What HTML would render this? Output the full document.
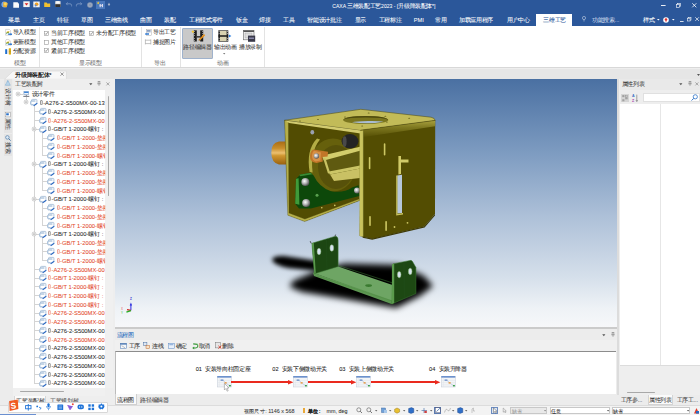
<!DOCTYPE html>
<html><head><meta charset="utf-8"><style>
*{box-sizing:border-box;margin:0;padding:0}
html,body{width:700px;height:415px;overflow:hidden;background:#eeeeee;font-family:"Liberation Sans",sans-serif;}
.a{position:absolute}
svg.a{overflow:visible}
.t{position:absolute;white-space:nowrap;line-height:1;font-weight:500;-webkit-text-stroke:0.06px currentColor}
.tofu{display:inline-block;vertical-align:-0.5px;margin-right:0.4px}
</style></head><body>
<div class="a" style="left:0px;top:0px;width:700px;height:25.6px;background:#2b579a"></div>
<div class="t" style="left:332.3px;top:3.77px;font-size:5.65px;color:#fff;-webkit-text-stroke:0.04px #fff"><span style="font-size:5.05px">CAXA </span><span style="letter-spacing:-0.35px">三维装配工艺</span><span style="font-size:5.05px">2023 - [</span><span style="letter-spacing:-0.35px">升级降装配体</span><span style="font-size:5.05px">*]</span></div>
<div class="t" style="left:8px;top:17.88px;font-size:5.65px;color:#fff;-webkit-text-stroke:0.04px #fff"><span style="letter-spacing:-0.35px">菜单</span></div>
<div class="t" style="left:33px;top:17.88px;font-size:5.65px;color:#fff;-webkit-text-stroke:0.04px #fff"><span style="letter-spacing:-0.35px">主页</span></div>
<div class="t" style="left:57px;top:17.88px;font-size:5.65px;color:#fff;-webkit-text-stroke:0.04px #fff"><span style="letter-spacing:-0.35px">特征</span></div>
<div class="t" style="left:81px;top:17.88px;font-size:5.65px;color:#fff;-webkit-text-stroke:0.04px #fff"><span style="letter-spacing:-0.35px">草图</span></div>
<div class="t" style="left:105px;top:17.88px;font-size:5.65px;color:#fff;-webkit-text-stroke:0.04px #fff"><span style="letter-spacing:-0.35px">三维曲线</span></div>
<div class="t" style="left:140px;top:17.88px;font-size:5.65px;color:#fff;-webkit-text-stroke:0.04px #fff"><span style="letter-spacing:-0.35px">曲面</span></div>
<div class="t" style="left:164.4px;top:17.88px;font-size:5.65px;color:#fff;-webkit-text-stroke:0.04px #fff"><span style="letter-spacing:-0.35px">装配</span></div>
<div class="t" style="left:189px;top:17.88px;font-size:5.65px;color:#fff;-webkit-text-stroke:0.04px #fff"><span style="letter-spacing:-0.35px">工程模式零件</span></div>
<div class="t" style="left:236px;top:17.88px;font-size:5.65px;color:#fff;-webkit-text-stroke:0.04px #fff"><span style="letter-spacing:-0.35px">钣金</span></div>
<div class="t" style="left:259px;top:17.88px;font-size:5.65px;color:#fff;-webkit-text-stroke:0.04px #fff"><span style="letter-spacing:-0.35px">焊接</span></div>
<div class="t" style="left:283.4px;top:17.88px;font-size:5.65px;color:#fff;-webkit-text-stroke:0.04px #fff"><span style="letter-spacing:-0.35px">工具</span></div>
<div class="t" style="left:307.4px;top:17.88px;font-size:5.65px;color:#fff;-webkit-text-stroke:0.04px #fff"><span style="letter-spacing:-0.35px">智能设计批注</span></div>
<div class="t" style="left:354.6px;top:17.88px;font-size:5.65px;color:#fff;-webkit-text-stroke:0.04px #fff"><span style="letter-spacing:-0.35px">显示</span></div>
<div class="t" style="left:378.7px;top:17.88px;font-size:5.65px;color:#fff;-webkit-text-stroke:0.04px #fff"><span style="letter-spacing:-0.35px">工程标注</span></div>
<div class="t" style="left:413.7px;top:17.88px;font-size:5.65px;color:#fff;-webkit-text-stroke:0.04px #fff">PMI</div>
<div class="t" style="left:435px;top:17.88px;font-size:5.65px;color:#fff;-webkit-text-stroke:0.04px #fff"><span style="letter-spacing:-0.35px">常用</span></div>
<div class="t" style="left:459px;top:17.88px;font-size:5.65px;color:#fff;-webkit-text-stroke:0.04px #fff"><span style="letter-spacing:-0.35px">加载应用程序</span></div>
<div class="t" style="left:507px;top:17.88px;font-size:5.65px;color:#fff;-webkit-text-stroke:0.04px #fff"><span style="letter-spacing:-0.35px">用户中心</span></div>
<div class="a" style="left:536px;top:14px;width:35.7px;height:11.5px;background:#fff"></div>
<div class="t" style="left:543.3px;top:18.07px;font-size:5.65px;color:#2b579a;"><span style="letter-spacing:-0.35px">三维工艺</span></div>
<div class="t" style="left:592px;top:17.88px;font-size:5.65px;color:#d0dbeb;"><span style="letter-spacing:-0.35px">功能搜索</span>...</div>
<div class="t" style="left:642.9px;top:17.88px;font-size:5.65px;color:#fff;-webkit-text-stroke:0.04px #fff"><span style="letter-spacing:-0.35px">样式</span></div>
<div class="a" style="left:0px;top:25.6px;width:700px;height:42.9px;background:#fff;border-bottom:0.7px solid #d8d8d8"></div>
<div class="t" style="left:12.7px;top:30.47px;font-size:5.65px;color:#3a3a3a;"><span style="letter-spacing:-0.35px">导入模型</span></div>
<div class="t" style="left:12.7px;top:39.88px;font-size:5.65px;color:#3a3a3a;"><span style="letter-spacing:-0.35px">更新模型</span></div>
<div class="t" style="left:12.7px;top:49.27px;font-size:5.65px;color:#3a3a3a;"><span style="letter-spacing:-0.35px">分配资源</span></div>
<div class="t" style="left:14.4px;top:60.88px;font-size:5.65px;color:#777;"><span style="letter-spacing:-0.35px">模型</span></div>
<div class="a" style="left:39.3px;top:27.3px;width:0.7px;height:39.3px;background:#e3e3e3"></div>
<svg class="a" style="left:44.3px;top:30.5px;" width="4.8" height="4.8" viewBox="0 0 4.8 4.8"><rect x="0.3" y="0.3" width="4.2" height="4.2" fill="#fff" stroke="#9a9a9a" stroke-width="0.6"/><path d="M1 2.5 L2 3.5 L3.8 1.2" fill="none" stroke="#555" stroke-width="0.6"/></svg>
<div class="t" style="left:51.1px;top:31.07px;font-size:5.65px;color:#3a3a3a;"><span style="letter-spacing:-0.35px">当前工序模型</span></div>
<svg class="a" style="left:89.3px;top:30.5px;" width="4.8" height="4.8" viewBox="0 0 4.8 4.8"><rect x="0.3" y="0.3" width="4.2" height="4.2" fill="#fff" stroke="#9a9a9a" stroke-width="0.6"/><path d="M1 2.5 L2 3.5 L3.8 1.2" fill="none" stroke="#555" stroke-width="0.6"/></svg>
<div class="t" style="left:96.4px;top:31.07px;font-size:5.65px;color:#3a3a3a;"><span style="letter-spacing:-0.35px">未分配工序模型</span></div>
<svg class="a" style="left:44.3px;top:39.5px;" width="4.8" height="4.8" viewBox="0 0 4.8 4.8"><rect x="0.3" y="0.3" width="4.2" height="4.2" fill="#fff" stroke="#9a9a9a" stroke-width="0.6"/></svg>
<div class="t" style="left:51.1px;top:40.07px;font-size:5.65px;color:#3a3a3a;"><span style="letter-spacing:-0.35px">其他工序模型</span></div>
<svg class="a" style="left:44.3px;top:48.0px;" width="4.8" height="4.8" viewBox="0 0 4.8 4.8"><rect x="0.3" y="0.3" width="4.2" height="4.2" fill="#fff" stroke="#9a9a9a" stroke-width="0.6"/><path d="M1 2.5 L2 3.5 L3.8 1.2" fill="none" stroke="#555" stroke-width="0.6"/></svg>
<div class="t" style="left:51.1px;top:48.57px;font-size:5.65px;color:#3a3a3a;"><span style="letter-spacing:-0.35px">紧前工序模型</span></div>
<div class="t" style="left:78.9px;top:60.88px;font-size:5.65px;color:#777;"><span style="letter-spacing:-0.35px">显示模型</span></div>
<div class="a" style="left:140.7px;top:27.3px;width:0.7px;height:39.3px;background:#e3e3e3"></div>
<div class="t" style="left:152.9px;top:30.47px;font-size:5.65px;color:#3a3a3a;"><span style="letter-spacing:-0.35px">导出工艺</span></div>
<div class="t" style="left:152.9px;top:40.47px;font-size:5.65px;color:#3a3a3a;"><span style="letter-spacing:-0.35px">捕捉图片</span></div>
<div class="t" style="left:154.3px;top:60.88px;font-size:5.65px;color:#777;"><span style="letter-spacing:-0.35px">导出</span></div>
<div class="a" style="left:179.6px;top:27.3px;width:0.7px;height:39.3px;background:#e3e3e3"></div>
<div class="a" style="left:182.4px;top:28px;width:30.5px;height:30.6px;background:#c9c9c9;border:0.7px solid #9fb2cc;border-radius:1px"></div>
<div class="t" style="left:183.3px;top:45.07px;font-size:5.65px;color:#3a3a3a;"><span style="letter-spacing:-0.35px">路径编辑器</span></div>
<div class="t" style="left:213.9px;top:45.07px;font-size:5.65px;color:#3a3a3a;"><span style="letter-spacing:-0.35px">输出动画</span></div>
<div class="t" style="left:239px;top:45.07px;font-size:5.65px;color:#3a3a3a;"><span style="letter-spacing:-0.35px">播放录制</span></div>
<div class="t" style="left:217.1px;top:60.88px;font-size:5.65px;color:#777;"><span style="letter-spacing:-0.35px">动画</span></div>
<div class="a" style="left:264.3px;top:27.3px;width:0.7px;height:39.3px;background:#e3e3e3"></div>
<svg class="a" style="left:4.6px;top:29.2px;" width="7.2" height="6.8" viewBox="0 0 7.2 6.8"><path d="M0.6 0.4 L4.4 0.4 L5.6 1.6 L5.6 6.2 L0.6 6.2 Z" fill="#fff" stroke="#9a9a9a" stroke-width="0.4"/><path d="M1 3.6 Q2.5 1.8 4.6 2.4 L3.4 4.6 Z" fill="#e0b020"/><path d="M1 4.8 Q2 3.4 3.8 3.6" fill="none" stroke="#3a9a5a" stroke-width="0.7"/><path d="M3.2 5.2 L6.4 5.2" stroke="#1f6fd0" stroke-width="1.3"/><path d="M5.8 3.9 L7.2 5.2 L5.8 6.5 Z" fill="#1f6fd0"/></svg>
<svg class="a" style="left:4.6px;top:38.6px;" width="7.2" height="6.8" viewBox="0 0 7.2 6.8"><path d="M2 0.3 Q5 0.3 5.6 2.6 L5.6 6.2 L0.6 6.2 L0.6 2 Q0.8 0.3 2 0.3 Z" fill="#fff" stroke="#9a9a9a" stroke-width="0.4"/><path d="M1 3.8 Q2.5 2 4.6 2.6 L3.4 4.8 Z" fill="#e0b020"/><path d="M1 5 Q2 3.6 3.8 3.8" fill="none" stroke="#3a9a5a" stroke-width="0.7"/><path d="M3.2 5.2 L6.4 5.2" stroke="#1f6fd0" stroke-width="1.3"/><path d="M5.8 3.9 L7.2 5.2 L5.8 6.5 Z" fill="#1f6fd0"/></svg>
<svg class="a" style="left:4.8px;top:48.4px;" width="7" height="7" viewBox="0 0 7 7"><rect x="0.2" y="1.2" width="1.9" height="4.8" fill="#1f6fd0"/><rect x="3.8" y="0.2" width="2.2" height="6.4" fill="#e8b820"/><path d="M3.8 2 L6 2 M3.8 3.5 L6 3.5 M3.8 5 L6 5" stroke="#9a7a10" stroke-width="0.4"/><path d="M2.8 1.6 L2.8 5.6" stroke="#aaa" stroke-width="0.4"/></svg>
<svg class="a" style="left:144.9px;top:29.1px;" width="6.6" height="6.8" viewBox="0 0 6.6 6.8"><rect x="1.2" y="0.3" width="5" height="6" fill="#fff" stroke="#999" stroke-width="0.4"/><path d="M1.8 1.6 L5.6 1.6 M1.8 2.8 L5.6 2.8" stroke="#2a4f8a" stroke-width="0.6"/><path d="M0.2 5 L4 5" stroke="#1f6fd0" stroke-width="1.4"/></svg>
<svg class="a" style="left:145px;top:38.8px;" width="6.2" height="5.8" viewBox="0 0 6.2 5.8"><path d="M0.4 0.4 L0.4 5.4 M5.8 0.4 L5.8 5.4 M0.4 1.2 L5.8 1.2 M0.4 4.6 L5.8 4.6" stroke="#9a9a9a" stroke-width="0.6" fill="none"/></svg>
<svg class="a" style="left:191.6px;top:30.4px;" width="13.6" height="11.8" viewBox="0 0 13.6 11.8"><rect x="1.8" y="0.3" width="3" height="11.2" fill="#1e1e1e"/><rect x="8.2" y="0.3" width="3" height="11.2" fill="#1e1e1e"/><g fill="#ddd"><rect x="2.3" y="1" width="0.7" height="0.8"/><rect x="2.3" y="3" width="0.7" height="0.8"/><rect x="2.3" y="5" width="0.7" height="0.8"/><rect x="2.3" y="8" width="0.7" height="0.8"/><rect x="2.3" y="10" width="0.7" height="0.8"/><rect x="10" y="1" width="0.7" height="0.8"/><rect x="10" y="3" width="0.7" height="0.8"/><rect x="10" y="5" width="0.7" height="0.8"/></g><rect x="4.8" y="6.2" width="3.4" height="1.3" fill="#1e1e1e"/><path d="M0.9 0 L1.3 1.1 L2.4 1.2 L1.5 1.9 L1.8 3 L0.9 2.4 L0 3 L0.3 1.9 L-0.6 1.2 L0.5 1.1 Z" fill="#f8c820"/><path d="M12.6 4.6 L7 10.2" stroke="#e8901a" stroke-width="1.6"/><path d="M6.4 10.8 L7.4 9.4 L8 10 Z" fill="#333"/></svg>
<svg class="a" style="left:218.2px;top:30.2px;" width="14" height="12" viewBox="0 0 14 12"><rect x="0.3" y="0.3" width="10" height="11.4" fill="#2a2a2a"/><rect x="2" y="0.9" width="6.6" height="4.6" fill="#d8d2b0"/><rect x="2" y="6.5" width="6.6" height="4.6" fill="#d8d2b0"/><rect x="0.3" y="5.5" width="10" height="1" fill="#111"/><g fill="#eee"><rect x="0.7" y="1" width="0.8" height="0.7"/><rect x="0.7" y="3" width="0.8" height="0.7"/><rect x="0.7" y="8" width="0.8" height="0.7"/><rect x="0.7" y="10" width="0.8" height="0.7"/><rect x="9.1" y="1" width="0.8" height="0.7"/><rect x="9.1" y="3" width="0.8" height="0.7"/><rect x="9.1" y="8" width="0.8" height="0.7"/><rect x="9.1" y="10" width="0.8" height="0.7"/></g><path d="M10.9 4.6 L13.4 6.1 L10.9 7.6 Z" fill="#2f80e0"/></svg>
<svg class="a" style="left:223.4px;top:52.6px;" width="2.4" height="1.6" viewBox="0 0 2.4 1.6"><path d="M0 0 L2.4 0 L1.2 1.4 Z" fill="#777"/></svg>
<svg class="a" style="left:243.4px;top:29.7px;" width="12.6" height="12.4" viewBox="0 0 12.6 12.4"><rect x="0.4" y="0.4" width="10.6" height="9.4" fill="#f4f4f4" stroke="#666" stroke-width="0.6"/><rect x="0.4" y="0.4" width="10.6" height="1.6" fill="#555"/><rect x="2" y="3" width="7" height="5" fill="#ddd" stroke="#999" stroke-width="0.4"/><rect x="5" y="5.6" width="7.2" height="6.2" fill="#3a3a4a"/><rect x="6" y="7.6" width="5" height="1.2" fill="#9a9ac0"/></svg>
<svg class="a" style="left:0.8px;top:1.3px;" width="7.2" height="6.8" viewBox="0 0 7.2 6.8"><circle cx="3.4" cy="3.6" r="3" fill="#7aa8e8"/><path d="M2.4 0.8 L6.8 2 L5.6 6.4 L2.2 5.8 Z" fill="#f0b030"/><circle cx="4.4" cy="3" r="1.4" fill="#f8d860"/></svg>
<svg class="a" style="left:12.9px;top:1.6px;" width="6.4" height="6" viewBox="0 0 6.4 6"><path d="M0.3 0.3 L4.6 0.3 L6 1.7 L6 5.7 L0.3 5.7 Z" fill="#fafafa"/></svg>
<svg class="a" style="left:23px;top:1.4px;" width="7" height="6.4" viewBox="0 0 7 6.4"><rect x="0.3" y="0.3" width="6.4" height="5.8" fill="#f2f2f2"/><path d="M1.6 2.2 L3.5 4.6 L5.4 2.2 Z" fill="#d82020"/></svg>
<svg class="a" style="left:33.4px;top:1.2px;" width="7" height="6.6" viewBox="0 0 7 6.6"><rect x="0.3" y="0.5" width="6.4" height="5.8" fill="#f2f2f2"/><circle cx="3.6" cy="3.2" r="1.8" fill="#f0a020"/><circle cx="2.6" cy="4.4" r="1" fill="#5a8ad8"/></svg>
<svg class="a" style="left:44.3px;top:1.8px;" width="6.4" height="5.2" viewBox="0 0 6.4 5.2"><path d="M0.2 0.6 L2.6 0.6 L3.2 1.4 L6.2 1.4 L6.2 5 L0.2 5 Z" fill="#f0c030"/></svg>
<svg class="a" style="left:55.2px;top:1.4px;" width="5.8" height="6.2" viewBox="0 0 5.8 6.2"><rect x="0.2" y="0.2" width="5.4" height="5.8" fill="#ddd"/><rect x="1.2" y="0.2" width="3.4" height="2.2" fill="#fafafa"/><rect x="0.2" y="3.2" width="5.4" height="2.8" fill="#333"/></svg>
<svg class="a" style="left:66px;top:2.2px;" width="6" height="4.6" viewBox="0 0 6 4.6"><path d="M1.6 0.4 L0.3 1.8 L1.6 3.2 M0.4 1.8 L4 1.8 Q5.6 1.8 5.6 3.4 L5.6 4.4" fill="none" stroke="#8aa4cc" stroke-width="0.7"/></svg>
<svg class="a" style="left:75.6px;top:2.2px;" width="6" height="4.6" viewBox="0 0 6 4.6"><path d="M4.4 0.4 L5.7 1.8 L4.4 3.2 M5.6 1.8 L2 1.8 Q0.4 1.8 0.4 3.4 L0.4 4.4" fill="none" stroke="#8aa4cc" stroke-width="0.7"/></svg>
<svg class="a" style="left:86.6px;top:1.6px;" width="6" height="6" viewBox="0 0 6 6"><circle cx="3" cy="3" r="2.8" fill="#8c9bb4"/><circle cx="3" cy="3" r="1.6" fill="none" stroke="#a8b4c8" stroke-width="0.5"/></svg>
<div class="a" style="left:96px;top:0.6px;width:8.6px;height:8.2px;background:#4a78bc"></div>
<svg class="a" style="left:97px;top:1.4px;" width="7" height="6.6" viewBox="0 0 7 6.6"><path d="M1.2 0.6 L1.6 1.6 L2.6 1.7 L1.8 2.3 L2.1 3.3 L1.2 2.7 L0.3 3.3 L0.6 2.3 L-0.2 1.7 L0.8 1.6 Z" fill="#f8d030"/><rect x="2.6" y="3" width="1.2" height="3.2" fill="#dde"/><rect x="4.8" y="3" width="1.2" height="3.2" fill="#dde"/><rect x="2.6" y="4.2" width="3.4" height="0.7" fill="#dde"/></svg>
<svg class="a" style="left:107.6px;top:3.2px;" width="2" height="3" viewBox="0 0 2 3"><path d="M0.2 0.4 L1.8 0.4 M0.2 1.2 L1.8 1.2 L1 2.6 Z" fill="#ddd" stroke="#ddd" stroke-width="0.4"/></svg>
<svg class="a" style="left:660.6px;top:5px;" width="4.6" height="1" viewBox="0 0 4.6 1"><rect width="4.6" height="0.9" fill="#fff"/></svg>
<svg class="a" style="left:676.2px;top:2.8px;" width="5" height="5" viewBox="0 0 5 5"><rect x="1.4" y="0.4" width="3.2" height="3.2" fill="none" stroke="#fff" stroke-width="0.6"/><rect x="0.4" y="1.4" width="3.2" height="3.2" fill="#2b579a" stroke="#fff" stroke-width="0.6"/></svg>
<svg class="a" style="left:692px;top:3px;" width="4.6" height="4.6" viewBox="0 0 4.6 4.6"><path d="M0.3 0.3 L4.3 4.3 M4.3 0.3 L0.3 4.3" stroke="#fff" stroke-width="0.8"/></svg>
<svg class="a" style="left:582.4px;top:16.4px;" width="4" height="6" viewBox="0 0 4 6"><circle cx="2" cy="2" r="1.6" fill="none" stroke="#dfe6f0" stroke-width="0.5"/><path d="M1.4 4 L2.6 4 M1.5 5 L2.5 5" stroke="#dfe6f0" stroke-width="0.5"/></svg>
<svg class="a" style="left:657.4px;top:18.8px;" width="2.6" height="1.8" viewBox="0 0 2.6 1.8"><path d="M0 0 L2.6 0 L1.3 1.6 Z" fill="#fff"/></svg>
<svg class="a" style="left:663.2px;top:16.6px;" width="6" height="6" viewBox="0 0 6 6"><circle cx="3" cy="3" r="2.8" fill="#fff"/><circle cx="3" cy="2.5" r="1.3" fill="#e03030"/><rect x="2.6" y="3" width="0.8" height="1.8" fill="#e03030"/></svg>
<svg class="a" style="left:671.6px;top:18.8px;" width="2.6" height="1.8" viewBox="0 0 2.6 1.8"><path d="M0 0 L2.6 0 L1.3 1.6 Z" fill="#fff"/></svg>
<svg class="a" style="left:679.6px;top:20.6px;" width="3.6" height="0.8" viewBox="0 0 3.6 0.8"><rect width="3.6" height="0.8" fill="#fff"/></svg>
<svg class="a" style="left:687px;top:17.4px;" width="4.4" height="4.4" viewBox="0 0 4.4 4.4"><rect x="1.2" y="0.3" width="2.8" height="2.8" fill="none" stroke="#fff" stroke-width="0.55"/><rect x="0.3" y="1.2" width="2.8" height="2.8" fill="#2b579a" stroke="#fff" stroke-width="0.55"/></svg>
<svg class="a" style="left:695px;top:17.4px;" width="4.2" height="4.2" viewBox="0 0 4.2 4.2"><path d="M0.3 0.3 L3.9 3.9 M3.9 0.3 L0.3 3.9" stroke="#fff" stroke-width="0.7"/></svg>
<div class="a" style="left:0px;top:68.5px;width:700px;height:10px;background:#e6e6e6"></div>
<svg class="a" style="left:0px;top:68.5px;" width="70" height="10.5" viewBox="0 0 70 10.5"><path d="M4.5 10.3 L13 2.1 L66.4 2.1 L66.4 10.3 Z" fill="#f7f7f7" stroke="#d0d0d0" stroke-width="0.5"/></svg>
<div class="t" style="left:15.4px;top:72.67px;font-size:5.65px;color:#1a1a1a;font-weight:700;-webkit-text-stroke:0"><span style="letter-spacing:-0.35px">升级降装配体</span>*</div>
<svg class="a" style="left:59.6px;top:72.4px;" width="4.2" height="4.2" viewBox="0 0 4.2 4.2"><path d="M0.5 0.5 L3.7 3.7 M3.7 0.5 L0.5 3.7" stroke="#555" stroke-width="0.6"/></svg>
<div class="a" style="left:0px;top:78.5px;width:114.5px;height:327px;background:#eeeeee"></div>
<div class="a" style="left:0px;top:78.5px;width:12.6px;height:327px;background:#ececec"></div>
<div class="a" style="left:3.6px;top:79.2px;width:8.6px;height:31px;background:#e4e4e4"></div>
<div class="a" style="left:3.6px;top:111px;width:8.6px;height:22px;background:#e4e4e4"></div>
<div class="a" style="left:3.6px;top:134px;width:8.6px;height:22px;background:#e4e4e4"></div>
<svg class="a" style="left:4.8px;top:80.2px;" width="5.6" height="5.6" viewBox="0 0 5.6 5.6"><path d="M2.8 0.3 L5.3 5.3 L0.3 5.3 Z" fill="#9cc3e0" stroke="#6aa0cc" stroke-width="0.4"/><path d="M1.5 3 L4.1 3 M1 4.2 L4.6 4.2" stroke="#fff" stroke-width="0.4"/></svg>
<div class="t" style="left:4.6px;top:87.8px;font-size:5.65px;color:#444;font-weight:500;writing-mode:vertical-rl;text-orientation:sideways">设计树</div>
<svg class="a" style="left:4.8px;top:111.6px;" width="5.6" height="5.2" viewBox="0 0 5.6 5.2"><rect x="0.3" y="0.3" width="5" height="4.6" fill="#fff" stroke="#888" stroke-width="0.4"/><rect x="1.2" y="1.3" width="2.6" height="2" fill="#2a70c8"/></svg>
<div class="t" style="left:4.6px;top:118.3px;font-size:5.65px;color:#444;font-weight:500;writing-mode:vertical-rl;text-orientation:sideways">属性</div>
<svg class="a" style="left:4.6px;top:135px;" width="6" height="6" viewBox="0 0 6 6"><circle cx="2.4" cy="2.4" r="1.8" fill="#dbe9f5" stroke="#3f6f9f" stroke-width="0.6"/><path d="M3.7 3.7 L5.6 5.6" stroke="#3f6f9f" stroke-width="0.9"/></svg>
<div class="t" style="left:4.6px;top:141.5px;font-size:5.65px;color:#444;font-weight:500;writing-mode:vertical-rl;text-orientation:sideways">搜索</div>
<div class="t" style="left:14.9px;top:81.88px;font-size:5.65px;color:#4a4a4a;"><span style="letter-spacing:-0.35px">工艺装配树</span></div>
<svg class="a" style="left:88.8px;top:82.6px;" width="3.6" height="2.4" viewBox="0 0 3.6 2.4"><path d="M0.2 0.2 L3.4 0.2 L1.8 2.2 Z" fill="#555"/></svg>
<svg class="a" style="left:96.8px;top:81.2px;" width="4" height="5" viewBox="0 0 4 5"><path d="M0.8 0.5 L3.2 0.5 M1.2 0.5 L1.2 2.8 M2.8 0.5 L2.8 2.8 M0.3 2.8 L3.7 2.8 M2 2.8 L2 4.8" fill="none" stroke="#666" stroke-width="0.5"/></svg>
<svg class="a" style="left:105.6px;top:82.1px;" width="3.8" height="3.8" viewBox="0 0 3.8 3.8"><path d="M0.4 0.4 L3.4 3.4 M3.4 0.4 L0.4 3.4" stroke="#666" stroke-width="0.5"/></svg>
<div class="a" style="left:12.9px;top:89.8px;width:92.3px;height:298.3px;background:#fff"></div>
<div class="a" style="left:105.2px;top:89.8px;width:7.6px;height:298.3px;background:#f0f0f0"></div>
<div class="a" style="left:107.7px;top:96px;width:1.6px;height:100px;background:#a8a8a8;border-radius:1px"></div>
<div class="a" style="left:12.9px;top:388.1px;width:92.3px;height:7.6px;background:#f0f0f0"></div>
<div class="a" style="left:20.4px;top:391px;width:43.3px;height:1.4px;background:#a8a8a8;border-radius:1px"></div>
<div class="a" style="left:14.2px;top:396px;width:32.2px;height:10px;background:#fafafa;border:0.5px solid #d7d7d7;border-top:none"></div>
<div class="t" style="left:16.3px;top:399.18px;font-size:5.65px;color:#444;"><span style="letter-spacing:-0.35px">工艺装配树</span></div>
<div class="t" style="left:50.2px;top:399.18px;font-size:5.65px;color:#555;"><span style="letter-spacing:-0.35px">工艺规划树</span></div>
<div class="a" style="left:0;top:0;width:700px;height:415px;clip-path:inset(89.8px 594.8px 26.9px 12.9px)">
<div class="a" style="left:34.3px;top:104.96000000000001px;width:0.55px;height:278.02px;background:#d4d4d4"></div>
<div class="a" style="left:26.2px;top:96.7px;width:0.55px;height:3.760000000000005px;background:#d4d4d4"></div>
<div class="a" style="left:19.8px;top:93.7px;width:3.099999999999998px;height:0.55px;background:#d4d4d4"></div>
<div class="a" style="left:34.3px;top:111.22px;width:4.5px;height:0.55px;background:#d4d4d4"></div>
<div class="a" style="left:34.3px;top:119.98px;width:4.5px;height:0.55px;background:#d4d4d4"></div>
<div class="a" style="left:34.3px;top:128.74px;width:4.5px;height:0.55px;background:#d4d4d4"></div>
<div class="a" style="left:42.4px;top:137.5px;width:4.399999999999999px;height:0.55px;background:#d4d4d4"></div>
<div class="a" style="left:42.4px;top:146.26px;width:4.399999999999999px;height:0.55px;background:#d4d4d4"></div>
<div class="a" style="left:42.4px;top:155.02px;width:4.399999999999999px;height:0.55px;background:#d4d4d4"></div>
<div class="a" style="left:34.3px;top:163.78px;width:4.5px;height:0.55px;background:#d4d4d4"></div>
<div class="a" style="left:42.4px;top:172.54000000000002px;width:4.399999999999999px;height:0.55px;background:#d4d4d4"></div>
<div class="a" style="left:42.4px;top:181.3px;width:4.399999999999999px;height:0.55px;background:#d4d4d4"></div>
<div class="a" style="left:42.4px;top:190.06px;width:4.399999999999999px;height:0.55px;background:#d4d4d4"></div>
<div class="a" style="left:34.3px;top:198.82px;width:4.5px;height:0.55px;background:#d4d4d4"></div>
<div class="a" style="left:42.4px;top:207.57999999999998px;width:4.399999999999999px;height:0.55px;background:#d4d4d4"></div>
<div class="a" style="left:42.4px;top:216.34px;width:4.399999999999999px;height:0.55px;background:#d4d4d4"></div>
<div class="a" style="left:42.4px;top:225.10000000000002px;width:4.399999999999999px;height:0.55px;background:#d4d4d4"></div>
<div class="a" style="left:34.3px;top:233.86px;width:4.5px;height:0.55px;background:#d4d4d4"></div>
<div class="a" style="left:42.4px;top:242.62px;width:4.399999999999999px;height:0.55px;background:#d4d4d4"></div>
<div class="a" style="left:42.4px;top:251.38px;width:4.399999999999999px;height:0.55px;background:#d4d4d4"></div>
<div class="a" style="left:42.4px;top:260.14px;width:4.399999999999999px;height:0.55px;background:#d4d4d4"></div>
<div class="a" style="left:34.3px;top:268.9px;width:4.5px;height:0.55px;background:#d4d4d4"></div>
<div class="a" style="left:34.3px;top:277.66px;width:4.5px;height:0.55px;background:#d4d4d4"></div>
<div class="a" style="left:34.3px;top:286.42px;width:4.5px;height:0.55px;background:#d4d4d4"></div>
<div class="a" style="left:34.3px;top:295.18px;width:4.5px;height:0.55px;background:#d4d4d4"></div>
<div class="a" style="left:34.3px;top:303.94px;width:4.5px;height:0.55px;background:#d4d4d4"></div>
<div class="a" style="left:34.3px;top:312.7px;width:4.5px;height:0.55px;background:#d4d4d4"></div>
<div class="a" style="left:34.3px;top:321.46px;width:4.5px;height:0.55px;background:#d4d4d4"></div>
<div class="a" style="left:34.3px;top:330.21999999999997px;width:4.5px;height:0.55px;background:#d4d4d4"></div>
<div class="a" style="left:34.3px;top:338.98px;width:4.5px;height:0.55px;background:#d4d4d4"></div>
<div class="a" style="left:34.3px;top:347.74px;width:4.5px;height:0.55px;background:#d4d4d4"></div>
<div class="a" style="left:34.3px;top:356.5px;width:4.5px;height:0.55px;background:#d4d4d4"></div>
<div class="a" style="left:34.3px;top:365.26px;width:4.5px;height:0.55px;background:#d4d4d4"></div>
<div class="a" style="left:34.3px;top:374.02px;width:4.5px;height:0.55px;background:#d4d4d4"></div>
<div class="a" style="left:34.3px;top:382.78px;width:4.5px;height:0.55px;background:#d4d4d4"></div>
<div class="a" style="left:42.4px;top:131.74px;width:0.55px;height:23.47999999999999px;background:#d4d4d4"></div>
<div class="a" style="left:42.4px;top:166.78px;width:0.55px;height:23.47999999999999px;background:#d4d4d4"></div>
<div class="a" style="left:42.4px;top:201.82px;width:0.55px;height:23.480000000000018px;background:#d4d4d4"></div>
<div class="a" style="left:42.4px;top:236.86px;width:0.55px;height:23.47999999999996px;background:#d4d4d4"></div>
<svg class="a" style="left:15.75px;top:91.65px;" width="4.1" height="4.1" viewBox="0 0 4.1 4.1"><rect x="0.25" y="0.25" width="3.6" height="3.6" rx="1.1" fill="#f8f8f8" stroke="#a8a8a8" stroke-width="0.5"/><path d="M1 2.05 L3.1 2.05" stroke="#666" stroke-width="0.55"/></svg>
<svg class="a" style="left:22.9px;top:90.7px;" width="6.6" height="6" viewBox="0 0 6.6 6"><rect x="0.9" y="0.4" width="4.8" height="3.4" fill="#eef4fb" stroke="#6b8db8" stroke-width="0.5"/><rect x="1.1" y="0.6" width="4.4" height="1.4" fill="#3f86d8"/><rect x="2.8" y="3.9" width="1" height="1" fill="#778"/><rect x="0.3" y="4.9" width="6" height="0.8" fill="#4a4f5a"/></svg>
<div class="t" style="left:31.8px;top:91.58px;font-size:5.65px;color:#3a3a3a;"><span style="letter-spacing:-0.35px">设计零件</span></div>
<svg class="a" style="left:24.15px;top:100.41000000000001px;" width="4.1" height="4.1" viewBox="0 0 4.1 4.1"><rect x="0.25" y="0.25" width="3.6" height="3.6" rx="1.1" fill="#f8f8f8" stroke="#a8a8a8" stroke-width="0.5"/><path d="M1 2.05 L3.1 2.05" stroke="#666" stroke-width="0.55"/></svg>
<svg class="a" style="left:30.4px;top:99.26px;" width="7.6" height="7" viewBox="0 0 7.6 7"><path d="M1.6 1.8 L1.6 1.1 Q1.6 0.4 2.3 0.4 L6.3 0.4 Q6.9 0.4 6.9 1 L6.9 3.8" fill="none" stroke="#a9c0d8" stroke-width="0.9"/><path d="M5.4 2 L1.4 2 Q0.8 2 0.8 2.6 L0.8 5.2 Q0.8 5.8 1.4 5.8 L3.7 5.8" fill="none" stroke="#7ea2c8" stroke-width="0.9"/><path d="M4 6.5 L6.9 4.4" stroke="#2c68c0" stroke-width="1.2" stroke-linecap="round"/></svg>
<div class="t" style="left:40.0px;top:100.06px;font-size:5.8px;color:#2a2a2a;"><svg class="tofu" width="2.8" height="5" viewBox="0 0 2.8 5"><rect x="0.55" y="0.4" width="1.7" height="4.3" rx="0.6" fill="none" stroke="currentColor" stroke-width="0.7" opacity="0.7"/></svg>-A276-2-S500MX-00-13</div>
<svg class="a" style="left:38.8px;top:108.02px;" width="7.6" height="7" viewBox="0 0 7.6 7"><path d="M1.6 1.8 L1.6 1.1 Q1.6 0.4 2.3 0.4 L6.3 0.4 Q6.9 0.4 6.9 1 L6.9 3.8" fill="none" stroke="#a9c0d8" stroke-width="0.9"/><path d="M5.4 2 L1.4 2 Q0.8 2 0.8 2.6 L0.8 5.2 Q0.8 5.8 1.4 5.8 L3.7 5.8" fill="none" stroke="#7ea2c8" stroke-width="0.9"/><path d="M4 6.5 L6.9 4.4" stroke="#2c68c0" stroke-width="1.2" stroke-linecap="round"/></svg>
<div class="t" style="left:48.3px;top:108.82px;font-size:5.8px;color:#2a2a2a;"><svg class="tofu" width="2.8" height="5" viewBox="0 0 2.8 5"><rect x="0.55" y="0.4" width="1.7" height="4.3" rx="0.6" fill="none" stroke="currentColor" stroke-width="0.7" opacity="0.7"/></svg>-A276-2-S500MX-00</div>
<svg class="a" style="left:38.8px;top:116.78px;" width="7.6" height="7" viewBox="0 0 7.6 7"><path d="M1.6 1.8 L1.6 1.1 Q1.6 0.4 2.3 0.4 L6.3 0.4 Q6.9 0.4 6.9 1 L6.9 3.8" fill="none" stroke="#a9c0d8" stroke-width="0.9"/><path d="M5.4 2 L1.4 2 Q0.8 2 0.8 2.6 L0.8 5.2 Q0.8 5.8 1.4 5.8 L3.7 5.8" fill="none" stroke="#7ea2c8" stroke-width="0.9"/><path d="M4 6.5 L6.9 4.4" stroke="#2c68c0" stroke-width="1.2" stroke-linecap="round"/></svg>
<div class="t" style="left:48.3px;top:117.58px;font-size:5.8px;color:#e4492c;"><svg class="tofu" width="2.8" height="5" viewBox="0 0 2.8 5"><rect x="0.55" y="0.4" width="1.7" height="4.3" rx="0.6" fill="none" stroke="currentColor" stroke-width="0.7" opacity="0.7"/></svg>-A276-2-S500MX-00</div>
<svg class="a" style="left:32.45px;top:126.69000000000001px;" width="4.1" height="4.1" viewBox="0 0 4.1 4.1"><rect x="0.25" y="0.25" width="3.6" height="3.6" rx="1.1" fill="#f8f8f8" stroke="#a8a8a8" stroke-width="0.5"/><path d="M1 2.05 L3.1 2.05" stroke="#666" stroke-width="0.55"/></svg>
<svg class="a" style="left:38.8px;top:125.54px;" width="7.6" height="7" viewBox="0 0 7.6 7"><path d="M1.6 1.8 L1.6 1.1 Q1.6 0.4 2.3 0.4 L6.3 0.4 Q6.9 0.4 6.9 1 L6.9 3.8" fill="none" stroke="#a9c0d8" stroke-width="0.9"/><path d="M5.4 2 L1.4 2 Q0.8 2 0.8 2.6 L0.8 5.2 Q0.8 5.8 1.4 5.8 L3.7 5.8" fill="none" stroke="#7ea2c8" stroke-width="0.9"/><path d="M4 6.5 L6.9 4.4" stroke="#2c68c0" stroke-width="1.2" stroke-linecap="round"/></svg>
<div class="t" style="left:48.3px;top:126.34px;font-size:5.8px;color:#2a2a2a;"><svg class="tofu" width="2.8" height="5" viewBox="0 0 2.8 5"><rect x="0.55" y="0.4" width="1.7" height="4.3" rx="0.6" fill="none" stroke="currentColor" stroke-width="0.7" opacity="0.7"/></svg>-GB/T 1-2000-<span style="letter-spacing:-0.20px">螺钉</span> :</div>
<svg class="a" style="left:46.8px;top:134.3px;" width="7.6" height="7" viewBox="0 0 7.6 7"><path d="M1.6 1.8 L1.6 1.1 Q1.6 0.4 2.3 0.4 L6.3 0.4 Q6.9 0.4 6.9 1 L6.9 3.8" fill="none" stroke="#a9c0d8" stroke-width="0.9"/><path d="M5.4 2 L1.4 2 Q0.8 2 0.8 2.6 L0.8 5.2 Q0.8 5.8 1.4 5.8 L3.7 5.8" fill="none" stroke="#7ea2c8" stroke-width="0.9"/><path d="M4 6.5 L6.9 4.4" stroke="#2c68c0" stroke-width="1.2" stroke-linecap="round"/></svg>
<div class="t" style="left:56.9px;top:135.10px;font-size:5.8px;color:#e4492c;"><svg class="tofu" width="2.8" height="5" viewBox="0 0 2.8 5"><rect x="0.55" y="0.4" width="1.7" height="4.3" rx="0.6" fill="none" stroke="currentColor" stroke-width="0.7" opacity="0.7"/></svg>-GB/T 1-2000-<span style="letter-spacing:-0.20px">垫圈</span></div>
<svg class="a" style="left:46.8px;top:143.06px;" width="7.6" height="7" viewBox="0 0 7.6 7"><path d="M1.6 1.8 L1.6 1.1 Q1.6 0.4 2.3 0.4 L6.3 0.4 Q6.9 0.4 6.9 1 L6.9 3.8" fill="none" stroke="#a9c0d8" stroke-width="0.9"/><path d="M5.4 2 L1.4 2 Q0.8 2 0.8 2.6 L0.8 5.2 Q0.8 5.8 1.4 5.8 L3.7 5.8" fill="none" stroke="#7ea2c8" stroke-width="0.9"/><path d="M4 6.5 L6.9 4.4" stroke="#2c68c0" stroke-width="1.2" stroke-linecap="round"/></svg>
<div class="t" style="left:56.9px;top:143.86px;font-size:5.8px;color:#e4492c;"><svg class="tofu" width="2.8" height="5" viewBox="0 0 2.8 5"><rect x="0.55" y="0.4" width="1.7" height="4.3" rx="0.6" fill="none" stroke="currentColor" stroke-width="0.7" opacity="0.7"/></svg>-GB/T 1-2000-<span style="letter-spacing:-0.20px">垫圈</span></div>
<svg class="a" style="left:46.8px;top:151.82000000000002px;" width="7.6" height="7" viewBox="0 0 7.6 7"><path d="M1.6 1.8 L1.6 1.1 Q1.6 0.4 2.3 0.4 L6.3 0.4 Q6.9 0.4 6.9 1 L6.9 3.8" fill="none" stroke="#a9c0d8" stroke-width="0.9"/><path d="M5.4 2 L1.4 2 Q0.8 2 0.8 2.6 L0.8 5.2 Q0.8 5.8 1.4 5.8 L3.7 5.8" fill="none" stroke="#7ea2c8" stroke-width="0.9"/><path d="M4 6.5 L6.9 4.4" stroke="#2c68c0" stroke-width="1.2" stroke-linecap="round"/></svg>
<div class="t" style="left:56.9px;top:152.62px;font-size:5.8px;color:#e4492c;"><svg class="tofu" width="2.8" height="5" viewBox="0 0 2.8 5"><rect x="0.55" y="0.4" width="1.7" height="4.3" rx="0.6" fill="none" stroke="currentColor" stroke-width="0.7" opacity="0.7"/></svg>-GB/T 1-2000-<span style="letter-spacing:-0.20px">螺钉</span></div>
<svg class="a" style="left:32.45px;top:161.73px;" width="4.1" height="4.1" viewBox="0 0 4.1 4.1"><rect x="0.25" y="0.25" width="3.6" height="3.6" rx="1.1" fill="#f8f8f8" stroke="#a8a8a8" stroke-width="0.5"/><path d="M1 2.05 L3.1 2.05" stroke="#666" stroke-width="0.55"/></svg>
<svg class="a" style="left:38.8px;top:160.58px;" width="7.6" height="7" viewBox="0 0 7.6 7"><path d="M1.6 1.8 L1.6 1.1 Q1.6 0.4 2.3 0.4 L6.3 0.4 Q6.9 0.4 6.9 1 L6.9 3.8" fill="none" stroke="#a9c0d8" stroke-width="0.9"/><path d="M5.4 2 L1.4 2 Q0.8 2 0.8 2.6 L0.8 5.2 Q0.8 5.8 1.4 5.8 L3.7 5.8" fill="none" stroke="#7ea2c8" stroke-width="0.9"/><path d="M4 6.5 L6.9 4.4" stroke="#2c68c0" stroke-width="1.2" stroke-linecap="round"/></svg>
<div class="t" style="left:48.3px;top:161.38px;font-size:5.8px;color:#2a2a2a;"><svg class="tofu" width="2.8" height="5" viewBox="0 0 2.8 5"><rect x="0.55" y="0.4" width="1.7" height="4.3" rx="0.6" fill="none" stroke="currentColor" stroke-width="0.7" opacity="0.7"/></svg>-GB/T 1-2000-<span style="letter-spacing:-0.20px">螺钉</span> :</div>
<svg class="a" style="left:46.8px;top:169.34000000000003px;" width="7.6" height="7" viewBox="0 0 7.6 7"><path d="M1.6 1.8 L1.6 1.1 Q1.6 0.4 2.3 0.4 L6.3 0.4 Q6.9 0.4 6.9 1 L6.9 3.8" fill="none" stroke="#a9c0d8" stroke-width="0.9"/><path d="M5.4 2 L1.4 2 Q0.8 2 0.8 2.6 L0.8 5.2 Q0.8 5.8 1.4 5.8 L3.7 5.8" fill="none" stroke="#7ea2c8" stroke-width="0.9"/><path d="M4 6.5 L6.9 4.4" stroke="#2c68c0" stroke-width="1.2" stroke-linecap="round"/></svg>
<div class="t" style="left:56.9px;top:170.14px;font-size:5.8px;color:#e4492c;"><svg class="tofu" width="2.8" height="5" viewBox="0 0 2.8 5"><rect x="0.55" y="0.4" width="1.7" height="4.3" rx="0.6" fill="none" stroke="currentColor" stroke-width="0.7" opacity="0.7"/></svg>-GB/T 1-2000-<span style="letter-spacing:-0.20px">垫圈</span></div>
<svg class="a" style="left:46.8px;top:178.10000000000002px;" width="7.6" height="7" viewBox="0 0 7.6 7"><path d="M1.6 1.8 L1.6 1.1 Q1.6 0.4 2.3 0.4 L6.3 0.4 Q6.9 0.4 6.9 1 L6.9 3.8" fill="none" stroke="#a9c0d8" stroke-width="0.9"/><path d="M5.4 2 L1.4 2 Q0.8 2 0.8 2.6 L0.8 5.2 Q0.8 5.8 1.4 5.8 L3.7 5.8" fill="none" stroke="#7ea2c8" stroke-width="0.9"/><path d="M4 6.5 L6.9 4.4" stroke="#2c68c0" stroke-width="1.2" stroke-linecap="round"/></svg>
<div class="t" style="left:56.9px;top:178.90px;font-size:5.8px;color:#e4492c;"><svg class="tofu" width="2.8" height="5" viewBox="0 0 2.8 5"><rect x="0.55" y="0.4" width="1.7" height="4.3" rx="0.6" fill="none" stroke="currentColor" stroke-width="0.7" opacity="0.7"/></svg>-GB/T 1-2000-<span style="letter-spacing:-0.20px">垫圈</span></div>
<svg class="a" style="left:46.8px;top:186.86px;" width="7.6" height="7" viewBox="0 0 7.6 7"><path d="M1.6 1.8 L1.6 1.1 Q1.6 0.4 2.3 0.4 L6.3 0.4 Q6.9 0.4 6.9 1 L6.9 3.8" fill="none" stroke="#a9c0d8" stroke-width="0.9"/><path d="M5.4 2 L1.4 2 Q0.8 2 0.8 2.6 L0.8 5.2 Q0.8 5.8 1.4 5.8 L3.7 5.8" fill="none" stroke="#7ea2c8" stroke-width="0.9"/><path d="M4 6.5 L6.9 4.4" stroke="#2c68c0" stroke-width="1.2" stroke-linecap="round"/></svg>
<div class="t" style="left:56.9px;top:187.66px;font-size:5.8px;color:#e4492c;"><svg class="tofu" width="2.8" height="5" viewBox="0 0 2.8 5"><rect x="0.55" y="0.4" width="1.7" height="4.3" rx="0.6" fill="none" stroke="currentColor" stroke-width="0.7" opacity="0.7"/></svg>-GB/T 1-2000-<span style="letter-spacing:-0.20px">螺钉</span></div>
<svg class="a" style="left:32.45px;top:196.76999999999998px;" width="4.1" height="4.1" viewBox="0 0 4.1 4.1"><rect x="0.25" y="0.25" width="3.6" height="3.6" rx="1.1" fill="#f8f8f8" stroke="#a8a8a8" stroke-width="0.5"/><path d="M1 2.05 L3.1 2.05" stroke="#666" stroke-width="0.55"/></svg>
<svg class="a" style="left:38.8px;top:195.62px;" width="7.6" height="7" viewBox="0 0 7.6 7"><path d="M1.6 1.8 L1.6 1.1 Q1.6 0.4 2.3 0.4 L6.3 0.4 Q6.9 0.4 6.9 1 L6.9 3.8" fill="none" stroke="#a9c0d8" stroke-width="0.9"/><path d="M5.4 2 L1.4 2 Q0.8 2 0.8 2.6 L0.8 5.2 Q0.8 5.8 1.4 5.8 L3.7 5.8" fill="none" stroke="#7ea2c8" stroke-width="0.9"/><path d="M4 6.5 L6.9 4.4" stroke="#2c68c0" stroke-width="1.2" stroke-linecap="round"/></svg>
<div class="t" style="left:48.3px;top:196.42px;font-size:5.8px;color:#2a2a2a;"><svg class="tofu" width="2.8" height="5" viewBox="0 0 2.8 5"><rect x="0.55" y="0.4" width="1.7" height="4.3" rx="0.6" fill="none" stroke="currentColor" stroke-width="0.7" opacity="0.7"/></svg>-GB/T 1-2000-<span style="letter-spacing:-0.20px">螺钉</span> :</div>
<svg class="a" style="left:46.8px;top:204.38px;" width="7.6" height="7" viewBox="0 0 7.6 7"><path d="M1.6 1.8 L1.6 1.1 Q1.6 0.4 2.3 0.4 L6.3 0.4 Q6.9 0.4 6.9 1 L6.9 3.8" fill="none" stroke="#a9c0d8" stroke-width="0.9"/><path d="M5.4 2 L1.4 2 Q0.8 2 0.8 2.6 L0.8 5.2 Q0.8 5.8 1.4 5.8 L3.7 5.8" fill="none" stroke="#7ea2c8" stroke-width="0.9"/><path d="M4 6.5 L6.9 4.4" stroke="#2c68c0" stroke-width="1.2" stroke-linecap="round"/></svg>
<div class="t" style="left:56.9px;top:205.18px;font-size:5.8px;color:#e4492c;"><svg class="tofu" width="2.8" height="5" viewBox="0 0 2.8 5"><rect x="0.55" y="0.4" width="1.7" height="4.3" rx="0.6" fill="none" stroke="currentColor" stroke-width="0.7" opacity="0.7"/></svg>-GB/T 1-2000-<span style="letter-spacing:-0.20px">垫圈</span></div>
<svg class="a" style="left:46.8px;top:213.14000000000001px;" width="7.6" height="7" viewBox="0 0 7.6 7"><path d="M1.6 1.8 L1.6 1.1 Q1.6 0.4 2.3 0.4 L6.3 0.4 Q6.9 0.4 6.9 1 L6.9 3.8" fill="none" stroke="#a9c0d8" stroke-width="0.9"/><path d="M5.4 2 L1.4 2 Q0.8 2 0.8 2.6 L0.8 5.2 Q0.8 5.8 1.4 5.8 L3.7 5.8" fill="none" stroke="#7ea2c8" stroke-width="0.9"/><path d="M4 6.5 L6.9 4.4" stroke="#2c68c0" stroke-width="1.2" stroke-linecap="round"/></svg>
<div class="t" style="left:56.9px;top:213.94px;font-size:5.8px;color:#e4492c;"><svg class="tofu" width="2.8" height="5" viewBox="0 0 2.8 5"><rect x="0.55" y="0.4" width="1.7" height="4.3" rx="0.6" fill="none" stroke="currentColor" stroke-width="0.7" opacity="0.7"/></svg>-GB/T 1-2000-<span style="letter-spacing:-0.20px">垫圈</span></div>
<svg class="a" style="left:46.8px;top:221.90000000000003px;" width="7.6" height="7" viewBox="0 0 7.6 7"><path d="M1.6 1.8 L1.6 1.1 Q1.6 0.4 2.3 0.4 L6.3 0.4 Q6.9 0.4 6.9 1 L6.9 3.8" fill="none" stroke="#a9c0d8" stroke-width="0.9"/><path d="M5.4 2 L1.4 2 Q0.8 2 0.8 2.6 L0.8 5.2 Q0.8 5.8 1.4 5.8 L3.7 5.8" fill="none" stroke="#7ea2c8" stroke-width="0.9"/><path d="M4 6.5 L6.9 4.4" stroke="#2c68c0" stroke-width="1.2" stroke-linecap="round"/></svg>
<div class="t" style="left:56.9px;top:222.70px;font-size:5.8px;color:#e4492c;"><svg class="tofu" width="2.8" height="5" viewBox="0 0 2.8 5"><rect x="0.55" y="0.4" width="1.7" height="4.3" rx="0.6" fill="none" stroke="currentColor" stroke-width="0.7" opacity="0.7"/></svg>-GB/T 1-2000-<span style="letter-spacing:-0.20px">螺钉</span></div>
<svg class="a" style="left:32.45px;top:231.81px;" width="4.1" height="4.1" viewBox="0 0 4.1 4.1"><rect x="0.25" y="0.25" width="3.6" height="3.6" rx="1.1" fill="#f8f8f8" stroke="#a8a8a8" stroke-width="0.5"/><path d="M1 2.05 L3.1 2.05" stroke="#666" stroke-width="0.55"/></svg>
<svg class="a" style="left:38.8px;top:230.66000000000003px;" width="7.6" height="7" viewBox="0 0 7.6 7"><path d="M1.6 1.8 L1.6 1.1 Q1.6 0.4 2.3 0.4 L6.3 0.4 Q6.9 0.4 6.9 1 L6.9 3.8" fill="none" stroke="#a9c0d8" stroke-width="0.9"/><path d="M5.4 2 L1.4 2 Q0.8 2 0.8 2.6 L0.8 5.2 Q0.8 5.8 1.4 5.8 L3.7 5.8" fill="none" stroke="#7ea2c8" stroke-width="0.9"/><path d="M4 6.5 L6.9 4.4" stroke="#2c68c0" stroke-width="1.2" stroke-linecap="round"/></svg>
<div class="t" style="left:48.3px;top:231.46px;font-size:5.8px;color:#2a2a2a;"><svg class="tofu" width="2.8" height="5" viewBox="0 0 2.8 5"><rect x="0.55" y="0.4" width="1.7" height="4.3" rx="0.6" fill="none" stroke="currentColor" stroke-width="0.7" opacity="0.7"/></svg>-GB/T 1-2000-<span style="letter-spacing:-0.20px">螺钉</span> :</div>
<svg class="a" style="left:46.8px;top:239.42000000000002px;" width="7.6" height="7" viewBox="0 0 7.6 7"><path d="M1.6 1.8 L1.6 1.1 Q1.6 0.4 2.3 0.4 L6.3 0.4 Q6.9 0.4 6.9 1 L6.9 3.8" fill="none" stroke="#a9c0d8" stroke-width="0.9"/><path d="M5.4 2 L1.4 2 Q0.8 2 0.8 2.6 L0.8 5.2 Q0.8 5.8 1.4 5.8 L3.7 5.8" fill="none" stroke="#7ea2c8" stroke-width="0.9"/><path d="M4 6.5 L6.9 4.4" stroke="#2c68c0" stroke-width="1.2" stroke-linecap="round"/></svg>
<div class="t" style="left:56.9px;top:240.22px;font-size:5.8px;color:#e4492c;"><svg class="tofu" width="2.8" height="5" viewBox="0 0 2.8 5"><rect x="0.55" y="0.4" width="1.7" height="4.3" rx="0.6" fill="none" stroke="currentColor" stroke-width="0.7" opacity="0.7"/></svg>-GB/T 1-2000-<span style="letter-spacing:-0.20px">垫圈</span></div>
<svg class="a" style="left:46.8px;top:248.18px;" width="7.6" height="7" viewBox="0 0 7.6 7"><path d="M1.6 1.8 L1.6 1.1 Q1.6 0.4 2.3 0.4 L6.3 0.4 Q6.9 0.4 6.9 1 L6.9 3.8" fill="none" stroke="#a9c0d8" stroke-width="0.9"/><path d="M5.4 2 L1.4 2 Q0.8 2 0.8 2.6 L0.8 5.2 Q0.8 5.8 1.4 5.8 L3.7 5.8" fill="none" stroke="#7ea2c8" stroke-width="0.9"/><path d="M4 6.5 L6.9 4.4" stroke="#2c68c0" stroke-width="1.2" stroke-linecap="round"/></svg>
<div class="t" style="left:56.9px;top:248.98px;font-size:5.8px;color:#e4492c;"><svg class="tofu" width="2.8" height="5" viewBox="0 0 2.8 5"><rect x="0.55" y="0.4" width="1.7" height="4.3" rx="0.6" fill="none" stroke="currentColor" stroke-width="0.7" opacity="0.7"/></svg>-GB/T 1-2000-<span style="letter-spacing:-0.20px">垫圈</span></div>
<svg class="a" style="left:46.8px;top:256.94px;" width="7.6" height="7" viewBox="0 0 7.6 7"><path d="M1.6 1.8 L1.6 1.1 Q1.6 0.4 2.3 0.4 L6.3 0.4 Q6.9 0.4 6.9 1 L6.9 3.8" fill="none" stroke="#a9c0d8" stroke-width="0.9"/><path d="M5.4 2 L1.4 2 Q0.8 2 0.8 2.6 L0.8 5.2 Q0.8 5.8 1.4 5.8 L3.7 5.8" fill="none" stroke="#7ea2c8" stroke-width="0.9"/><path d="M4 6.5 L6.9 4.4" stroke="#2c68c0" stroke-width="1.2" stroke-linecap="round"/></svg>
<div class="t" style="left:56.9px;top:257.74px;font-size:5.8px;color:#e4492c;"><svg class="tofu" width="2.8" height="5" viewBox="0 0 2.8 5"><rect x="0.55" y="0.4" width="1.7" height="4.3" rx="0.6" fill="none" stroke="currentColor" stroke-width="0.7" opacity="0.7"/></svg>-GB/T 1-2000-<span style="letter-spacing:-0.20px">螺钉</span></div>
<svg class="a" style="left:38.8px;top:265.7px;" width="7.6" height="7" viewBox="0 0 7.6 7"><path d="M1.6 1.8 L1.6 1.1 Q1.6 0.4 2.3 0.4 L6.3 0.4 Q6.9 0.4 6.9 1 L6.9 3.8" fill="none" stroke="#a9c0d8" stroke-width="0.9"/><path d="M5.4 2 L1.4 2 Q0.8 2 0.8 2.6 L0.8 5.2 Q0.8 5.8 1.4 5.8 L3.7 5.8" fill="none" stroke="#7ea2c8" stroke-width="0.9"/><path d="M4 6.5 L6.9 4.4" stroke="#2c68c0" stroke-width="1.2" stroke-linecap="round"/></svg>
<div class="t" style="left:48.3px;top:266.50px;font-size:5.8px;color:#e4492c;"><svg class="tofu" width="2.8" height="5" viewBox="0 0 2.8 5"><rect x="0.55" y="0.4" width="1.7" height="4.3" rx="0.6" fill="none" stroke="currentColor" stroke-width="0.7" opacity="0.7"/></svg>-A276-2-S500MX-00</div>
<svg class="a" style="left:38.8px;top:274.46000000000004px;" width="7.6" height="7" viewBox="0 0 7.6 7"><path d="M1.6 1.8 L1.6 1.1 Q1.6 0.4 2.3 0.4 L6.3 0.4 Q6.9 0.4 6.9 1 L6.9 3.8" fill="none" stroke="#a9c0d8" stroke-width="0.9"/><path d="M5.4 2 L1.4 2 Q0.8 2 0.8 2.6 L0.8 5.2 Q0.8 5.8 1.4 5.8 L3.7 5.8" fill="none" stroke="#7ea2c8" stroke-width="0.9"/><path d="M4 6.5 L6.9 4.4" stroke="#2c68c0" stroke-width="1.2" stroke-linecap="round"/></svg>
<div class="t" style="left:48.3px;top:275.26px;font-size:5.8px;color:#e4492c;"><svg class="tofu" width="2.8" height="5" viewBox="0 0 2.8 5"><rect x="0.55" y="0.4" width="1.7" height="4.3" rx="0.6" fill="none" stroke="currentColor" stroke-width="0.7" opacity="0.7"/></svg>-GB/T 1-2000-<span style="letter-spacing:-0.20px">螺钉</span> :</div>
<svg class="a" style="left:38.8px;top:283.22px;" width="7.6" height="7" viewBox="0 0 7.6 7"><path d="M1.6 1.8 L1.6 1.1 Q1.6 0.4 2.3 0.4 L6.3 0.4 Q6.9 0.4 6.9 1 L6.9 3.8" fill="none" stroke="#a9c0d8" stroke-width="0.9"/><path d="M5.4 2 L1.4 2 Q0.8 2 0.8 2.6 L0.8 5.2 Q0.8 5.8 1.4 5.8 L3.7 5.8" fill="none" stroke="#7ea2c8" stroke-width="0.9"/><path d="M4 6.5 L6.9 4.4" stroke="#2c68c0" stroke-width="1.2" stroke-linecap="round"/></svg>
<div class="t" style="left:48.3px;top:284.02px;font-size:5.8px;color:#e4492c;"><svg class="tofu" width="2.8" height="5" viewBox="0 0 2.8 5"><rect x="0.55" y="0.4" width="1.7" height="4.3" rx="0.6" fill="none" stroke="currentColor" stroke-width="0.7" opacity="0.7"/></svg>-GB/T 1-2000-<span style="letter-spacing:-0.20px">螺钉</span> :</div>
<svg class="a" style="left:38.8px;top:291.98px;" width="7.6" height="7" viewBox="0 0 7.6 7"><path d="M1.6 1.8 L1.6 1.1 Q1.6 0.4 2.3 0.4 L6.3 0.4 Q6.9 0.4 6.9 1 L6.9 3.8" fill="none" stroke="#a9c0d8" stroke-width="0.9"/><path d="M5.4 2 L1.4 2 Q0.8 2 0.8 2.6 L0.8 5.2 Q0.8 5.8 1.4 5.8 L3.7 5.8" fill="none" stroke="#7ea2c8" stroke-width="0.9"/><path d="M4 6.5 L6.9 4.4" stroke="#2c68c0" stroke-width="1.2" stroke-linecap="round"/></svg>
<div class="t" style="left:48.3px;top:292.78px;font-size:5.8px;color:#e4492c;"><svg class="tofu" width="2.8" height="5" viewBox="0 0 2.8 5"><rect x="0.55" y="0.4" width="1.7" height="4.3" rx="0.6" fill="none" stroke="currentColor" stroke-width="0.7" opacity="0.7"/></svg>-GB/T 1-2000-<span style="letter-spacing:-0.20px">螺钉</span> :</div>
<svg class="a" style="left:38.8px;top:300.74px;" width="7.6" height="7" viewBox="0 0 7.6 7"><path d="M1.6 1.8 L1.6 1.1 Q1.6 0.4 2.3 0.4 L6.3 0.4 Q6.9 0.4 6.9 1 L6.9 3.8" fill="none" stroke="#a9c0d8" stroke-width="0.9"/><path d="M5.4 2 L1.4 2 Q0.8 2 0.8 2.6 L0.8 5.2 Q0.8 5.8 1.4 5.8 L3.7 5.8" fill="none" stroke="#7ea2c8" stroke-width="0.9"/><path d="M4 6.5 L6.9 4.4" stroke="#2c68c0" stroke-width="1.2" stroke-linecap="round"/></svg>
<div class="t" style="left:48.3px;top:301.54px;font-size:5.8px;color:#e4492c;"><svg class="tofu" width="2.8" height="5" viewBox="0 0 2.8 5"><rect x="0.55" y="0.4" width="1.7" height="4.3" rx="0.6" fill="none" stroke="currentColor" stroke-width="0.7" opacity="0.7"/></svg>-GB/T 1-2000-<span style="letter-spacing:-0.20px">螺钉</span> :</div>
<svg class="a" style="left:38.8px;top:309.5px;" width="7.6" height="7" viewBox="0 0 7.6 7"><path d="M1.6 1.8 L1.6 1.1 Q1.6 0.4 2.3 0.4 L6.3 0.4 Q6.9 0.4 6.9 1 L6.9 3.8" fill="none" stroke="#a9c0d8" stroke-width="0.9"/><path d="M5.4 2 L1.4 2 Q0.8 2 0.8 2.6 L0.8 5.2 Q0.8 5.8 1.4 5.8 L3.7 5.8" fill="none" stroke="#7ea2c8" stroke-width="0.9"/><path d="M4 6.5 L6.9 4.4" stroke="#2c68c0" stroke-width="1.2" stroke-linecap="round"/></svg>
<div class="t" style="left:48.3px;top:310.30px;font-size:5.8px;color:#e4492c;"><svg class="tofu" width="2.8" height="5" viewBox="0 0 2.8 5"><rect x="0.55" y="0.4" width="1.7" height="4.3" rx="0.6" fill="none" stroke="currentColor" stroke-width="0.7" opacity="0.7"/></svg>-A276-2-S500MX-00</div>
<svg class="a" style="left:38.8px;top:318.26px;" width="7.6" height="7" viewBox="0 0 7.6 7"><path d="M1.6 1.8 L1.6 1.1 Q1.6 0.4 2.3 0.4 L6.3 0.4 Q6.9 0.4 6.9 1 L6.9 3.8" fill="none" stroke="#a9c0d8" stroke-width="0.9"/><path d="M5.4 2 L1.4 2 Q0.8 2 0.8 2.6 L0.8 5.2 Q0.8 5.8 1.4 5.8 L3.7 5.8" fill="none" stroke="#7ea2c8" stroke-width="0.9"/><path d="M4 6.5 L6.9 4.4" stroke="#2c68c0" stroke-width="1.2" stroke-linecap="round"/></svg>
<div class="t" style="left:48.3px;top:319.06px;font-size:5.8px;color:#e4492c;"><svg class="tofu" width="2.8" height="5" viewBox="0 0 2.8 5"><rect x="0.55" y="0.4" width="1.7" height="4.3" rx="0.6" fill="none" stroke="currentColor" stroke-width="0.7" opacity="0.7"/></svg>-A276-2-S500MX-00</div>
<svg class="a" style="left:38.8px;top:327.02px;" width="7.6" height="7" viewBox="0 0 7.6 7"><path d="M1.6 1.8 L1.6 1.1 Q1.6 0.4 2.3 0.4 L6.3 0.4 Q6.9 0.4 6.9 1 L6.9 3.8" fill="none" stroke="#a9c0d8" stroke-width="0.9"/><path d="M5.4 2 L1.4 2 Q0.8 2 0.8 2.6 L0.8 5.2 Q0.8 5.8 1.4 5.8 L3.7 5.8" fill="none" stroke="#7ea2c8" stroke-width="0.9"/><path d="M4 6.5 L6.9 4.4" stroke="#2c68c0" stroke-width="1.2" stroke-linecap="round"/></svg>
<div class="t" style="left:48.3px;top:327.82px;font-size:5.8px;color:#2a2a2a;"><svg class="tofu" width="2.8" height="5" viewBox="0 0 2.8 5"><rect x="0.55" y="0.4" width="1.7" height="4.3" rx="0.6" fill="none" stroke="currentColor" stroke-width="0.7" opacity="0.7"/></svg>-A276-2-S500MX-00</div>
<svg class="a" style="left:38.8px;top:335.78000000000003px;" width="7.6" height="7" viewBox="0 0 7.6 7"><path d="M1.6 1.8 L1.6 1.1 Q1.6 0.4 2.3 0.4 L6.3 0.4 Q6.9 0.4 6.9 1 L6.9 3.8" fill="none" stroke="#a9c0d8" stroke-width="0.9"/><path d="M5.4 2 L1.4 2 Q0.8 2 0.8 2.6 L0.8 5.2 Q0.8 5.8 1.4 5.8 L3.7 5.8" fill="none" stroke="#7ea2c8" stroke-width="0.9"/><path d="M4 6.5 L6.9 4.4" stroke="#2c68c0" stroke-width="1.2" stroke-linecap="round"/></svg>
<div class="t" style="left:48.3px;top:336.58px;font-size:5.8px;color:#e4492c;"><svg class="tofu" width="2.8" height="5" viewBox="0 0 2.8 5"><rect x="0.55" y="0.4" width="1.7" height="4.3" rx="0.6" fill="none" stroke="currentColor" stroke-width="0.7" opacity="0.7"/></svg>-A276-2-S500MX-00</div>
<svg class="a" style="left:38.8px;top:344.54px;" width="7.6" height="7" viewBox="0 0 7.6 7"><path d="M1.6 1.8 L1.6 1.1 Q1.6 0.4 2.3 0.4 L6.3 0.4 Q6.9 0.4 6.9 1 L6.9 3.8" fill="none" stroke="#a9c0d8" stroke-width="0.9"/><path d="M5.4 2 L1.4 2 Q0.8 2 0.8 2.6 L0.8 5.2 Q0.8 5.8 1.4 5.8 L3.7 5.8" fill="none" stroke="#7ea2c8" stroke-width="0.9"/><path d="M4 6.5 L6.9 4.4" stroke="#2c68c0" stroke-width="1.2" stroke-linecap="round"/></svg>
<div class="t" style="left:48.3px;top:345.34px;font-size:5.8px;color:#2a2a2a;"><svg class="tofu" width="2.8" height="5" viewBox="0 0 2.8 5"><rect x="0.55" y="0.4" width="1.7" height="4.3" rx="0.6" fill="none" stroke="currentColor" stroke-width="0.7" opacity="0.7"/></svg>-A276-2-S500MX-00</div>
<svg class="a" style="left:38.8px;top:353.3px;" width="7.6" height="7" viewBox="0 0 7.6 7"><path d="M1.6 1.8 L1.6 1.1 Q1.6 0.4 2.3 0.4 L6.3 0.4 Q6.9 0.4 6.9 1 L6.9 3.8" fill="none" stroke="#a9c0d8" stroke-width="0.9"/><path d="M5.4 2 L1.4 2 Q0.8 2 0.8 2.6 L0.8 5.2 Q0.8 5.8 1.4 5.8 L3.7 5.8" fill="none" stroke="#7ea2c8" stroke-width="0.9"/><path d="M4 6.5 L6.9 4.4" stroke="#2c68c0" stroke-width="1.2" stroke-linecap="round"/></svg>
<div class="t" style="left:48.3px;top:354.10px;font-size:5.8px;color:#2a2a2a;"><svg class="tofu" width="2.8" height="5" viewBox="0 0 2.8 5"><rect x="0.55" y="0.4" width="1.7" height="4.3" rx="0.6" fill="none" stroke="currentColor" stroke-width="0.7" opacity="0.7"/></svg>-A276-2-S500MX-00</div>
<svg class="a" style="left:38.8px;top:362.06px;" width="7.6" height="7" viewBox="0 0 7.6 7"><path d="M1.6 1.8 L1.6 1.1 Q1.6 0.4 2.3 0.4 L6.3 0.4 Q6.9 0.4 6.9 1 L6.9 3.8" fill="none" stroke="#a9c0d8" stroke-width="0.9"/><path d="M5.4 2 L1.4 2 Q0.8 2 0.8 2.6 L0.8 5.2 Q0.8 5.8 1.4 5.8 L3.7 5.8" fill="none" stroke="#7ea2c8" stroke-width="0.9"/><path d="M4 6.5 L6.9 4.4" stroke="#2c68c0" stroke-width="1.2" stroke-linecap="round"/></svg>
<div class="t" style="left:48.3px;top:362.86px;font-size:5.8px;color:#2a2a2a;"><svg class="tofu" width="2.8" height="5" viewBox="0 0 2.8 5"><rect x="0.55" y="0.4" width="1.7" height="4.3" rx="0.6" fill="none" stroke="currentColor" stroke-width="0.7" opacity="0.7"/></svg>-A276-2-S500MX-00</div>
<svg class="a" style="left:38.8px;top:370.82px;" width="7.6" height="7" viewBox="0 0 7.6 7"><path d="M1.6 1.8 L1.6 1.1 Q1.6 0.4 2.3 0.4 L6.3 0.4 Q6.9 0.4 6.9 1 L6.9 3.8" fill="none" stroke="#a9c0d8" stroke-width="0.9"/><path d="M5.4 2 L1.4 2 Q0.8 2 0.8 2.6 L0.8 5.2 Q0.8 5.8 1.4 5.8 L3.7 5.8" fill="none" stroke="#7ea2c8" stroke-width="0.9"/><path d="M4 6.5 L6.9 4.4" stroke="#2c68c0" stroke-width="1.2" stroke-linecap="round"/></svg>
<div class="t" style="left:48.3px;top:371.62px;font-size:5.8px;color:#2a2a2a;"><svg class="tofu" width="2.8" height="5" viewBox="0 0 2.8 5"><rect x="0.55" y="0.4" width="1.7" height="4.3" rx="0.6" fill="none" stroke="currentColor" stroke-width="0.7" opacity="0.7"/></svg>-A276-2-S500MX-00</div>
<svg class="a" style="left:38.8px;top:379.58px;" width="7.6" height="7" viewBox="0 0 7.6 7"><path d="M1.6 1.8 L1.6 1.1 Q1.6 0.4 2.3 0.4 L6.3 0.4 Q6.9 0.4 6.9 1 L6.9 3.8" fill="none" stroke="#a9c0d8" stroke-width="0.9"/><path d="M5.4 2 L1.4 2 Q0.8 2 0.8 2.6 L0.8 5.2 Q0.8 5.8 1.4 5.8 L3.7 5.8" fill="none" stroke="#7ea2c8" stroke-width="0.9"/><path d="M4 6.5 L6.9 4.4" stroke="#2c68c0" stroke-width="1.2" stroke-linecap="round"/></svg>
<div class="t" style="left:48.3px;top:380.38px;font-size:5.8px;color:#2a2a2a;"><svg class="tofu" width="2.8" height="5" viewBox="0 0 2.8 5"><rect x="0.55" y="0.4" width="1.7" height="4.3" rx="0.6" fill="none" stroke="currentColor" stroke-width="0.7" opacity="0.7"/></svg>-A276-2-S500MX-00</div>
</div>
<div class="a" style="left:114.8px;top:78.5px;width:502.3px;height:249.5px;background:linear-gradient(#4a70a2 0%,#7e9cc1 30%,#adc0d8 55%,#d6e0eb 80%,#eef2f6 92%,#f7f8fa 100%)"></div>
<svg class="a" style="left:0;top:0;clip-path:inset(78.5px 82.9px 87px 114.8px)" width="700" height="415" viewBox="0 0 700 415">
<defs>
 <linearGradient id="brass" x1="0" y1="0" x2="0" y2="1">
  <stop offset="0" stop-color="#a86c14"/><stop offset="0.3" stop-color="#c88e2c"/><stop offset="0.5" stop-color="#ecc070"/><stop offset="0.62" stop-color="#cf962f"/><stop offset="1" stop-color="#9a6210"/>
 </linearGradient>
 <linearGradient id="fold" x1="0" y1="0" x2="0" y2="1">
  <stop offset="0" stop-color="#a8a03e"/><stop offset="0.4" stop-color="#7e7820"/><stop offset="1" stop-color="#534d02"/>
 </linearGradient>
 <linearGradient id="rplate" x1="0" y1="0" x2="0" y2="1">
  <stop offset="0" stop-color="#b3ad48"/><stop offset="0.12" stop-color="#6e6816"/><stop offset="1" stop-color="#645e12"/>
 </linearGradient>
 <linearGradient id="cyl" x1="0" y1="0" x2="1" y2="0">
  <stop offset="0" stop-color="#3a3a3a"/><stop offset="0.25" stop-color="#6a6a6a"/><stop offset="0.5" stop-color="#1e1e1e"/><stop offset="1" stop-color="#151515"/>
 </linearGradient>
 <radialGradient id="screw" cx="0.4" cy="0.4" r="0.6">
  <stop offset="0" stop-color="#ffffff"/><stop offset="0.5" stop-color="#b8b8b8"/><stop offset="1" stop-color="#5a5a5a"/>
 </radialGradient>
 <filter id="blur" x="-30%" y="-50%" width="160%" height="200%"><feGaussianBlur stdDeviation="3.4"/></filter>
 <filter id="blur2" x="-30%" y="-50%" width="160%" height="200%"><feGaussianBlur stdDeviation="2.3"/></filter>
</defs>
<!-- shadow of lower bracket -->
<g filter="url(#blur2)">
 <path d="M272 259.5 Q273 255.5 284 256 L318 261 L318 271 L288 268 Q273 265 272 259.5 Z" fill="#000"/>
</g>
<g filter="url(#blur)">
 <path d="M290 287 Q290 281 300 278 L318 270 L345 263.5 L400 265 L424 276 L433 286 L420 296 L396 308 L345 299 L302 292 Z" fill="#000"/>
</g>
<!-- brass cylinder -->
<path d="M286 141.4 L279 141.6 Q271 143 271.3 153 Q271.5 163 279 164.5 L286 164.5 Z" fill="url(#brass)"/>
<!-- left plate outer -->
<path d="M284.6 120.3 L360.6 130.3 L359.6 200.5 L304.7 221.3 L288.3 214.9 Z" fill="#524c02"/>
<path d="M284.6 120.3 L288.4 121 L289 213 L304.9 219 L359.6 198.8 L359.6 200.5 L304.7 221.5 L287.8 215.2 Z" fill="#b6b04a" stroke="#4a460c" stroke-width="0.35"/>
<!-- hole dot -->
<ellipse cx="312.3" cy="132.2" rx="1.9" ry="2.3" fill="#9aa0b0"/>
<!-- large disc / inner plate -->
<clipPath id="inner"><path d="M289 123 L360 133 L359.6 198.6 L304.9 218.8 L289.6 212.8 Z"/></clipPath>
<g clip-path="url(#inner)">
<ellipse cx="333" cy="165" rx="23" ry="26.5" fill="#66600c"/>
<path d="M317 138.6 Q306 150 309.6 172 L312.6 172.4 Q310 152 320 139.6 Z" fill="#b3ad45"/>
<ellipse cx="336" cy="167" rx="18" ry="22" fill="#57510a"/>
<!-- channel -->
<path d="M324 160 L360 150.5 L360 167 L329.5 173.2 Z" fill="#5f5a10"/>
<path d="M321.5 155.8 L360 146.8 L360 150.8 L324 160.6 Z" fill="#d3cd6c"/>
<path d="M323 158 L328 173.5 L330.2 173.2 L325.6 158.4 Z" fill="#c8c262"/>
<path d="M329 171.6 L360 165.4 L360 168.4 L329.6 174.6 Z" fill="#cbc566"/>
<path d="M330 174.6 L360 168.4 L360 178 L334 181 Z" fill="#c9c164"/>
</g>
<!-- black cylinder -->
<ellipse cx="350" cy="141.3" rx="8.4" ry="7.2" fill="#242424"/>
<ellipse cx="344.6" cy="141.6" rx="2" ry="5.4" fill="#5a5a5a" opacity="0.7"/>
<!-- copper bracket -->
<path d="M313.4 149.6 L328 151.8 L327.6 156.6 L322.4 157 L322.8 161.6 L316.6 163 Q309.6 162 310 156 Q310.6 150.2 313.4 149.6 Z" fill="#c27628"/>
<path d="M314.4 150.8 L321 152.4 L320.4 160.6 L315.6 161.4 Q311.8 159.8 312 155.8 Q312.4 151.4 314.4 150.8 Z" fill="#e8a860" opacity="0.55"/>
<circle cx="316.4" cy="156" r="2.7" fill="url(#screw)"/>
<!-- PCB -->
<path d="M296 178.8 L300.6 174.4 L310.6 172.8 L313.6 175.4 Q319 187 331 191.2 Q344 193.2 352 187.4 L358.6 185.2 L359.3 196 L310.8 208.5 L299 208.5 L295.2 203.8 Z" fill="#0d480a"/>
<path d="M296 178.8 L298.6 178.2 L299.4 204.8 L295.2 203.8 Z" fill="#3f9a3a"/>
<path d="M299.2 174.8 L310.6 172.8 L312.4 174.2 L300.4 176.2 Z" fill="#3a8a34"/>
<circle cx="305.3" cy="181.9" r="4" fill="url(#screw)"/>
<circle cx="306.1" cy="203" r="4" fill="url(#screw)"/>
<circle cx="357" cy="190.4" r="3" fill="url(#screw)"/>
<circle cx="317" cy="195.2" r="1.5" fill="#5aa050"/>
<circle cx="321.8" cy="207.7" r="0.8" fill="#d8d070"/>
<circle cx="334.8" cy="205.4" r="0.8" fill="#d8d070"/>
<!-- top plate -->
<path d="M284.6 120.3 L360.8 109.3 L431 117.2 Q435 118 435.2 120.6 L361 130.6 Z" fill="#c2bb58" stroke="#4a4508" stroke-width="0.5"/>
<path d="M285 120.6 L361 130.6 L360.6 133.5 L289 123 Z" fill="#d2cb70"/>
<ellipse cx="365.7" cy="120" rx="22.6" ry="4" fill="#7a751e"/>
<path d="M352 122.2 Q368 124.6 383.5 121.8 Q380 120.8 368 121 Q356 121.2 352 122.2 Z" fill="#a9bcd3"/>
<path d="M343.2 120 Q345 116 365.7 116 Q386 116 388.3 120 Q384 117.6 365.7 117.6 Q347 117.6 343.2 120 Z" fill="#4e4a0e"/>
<g fill="#6f6a20"><ellipse cx="368.7" cy="113" rx="1" ry="0.5"/><ellipse cx="385.3" cy="116.3" rx="1" ry="0.5"/><ellipse cx="409.2" cy="118.3" rx="1" ry="0.5"/><ellipse cx="362.2" cy="126" rx="1" ry="0.5"/><ellipse cx="386.8" cy="122" rx="1" ry="0.5"/><ellipse cx="345" cy="117" rx="1" ry="0.5"/><ellipse cx="300" cy="121" rx="1" ry="0.5"/><ellipse cx="318" cy="119.5" rx="1" ry="0.5"/></g>
<!-- right plate -->
<path d="M360.6 130.3 L435.2 120.6 L435 214 L424.2 226.5 L372.2 239 L359.6 236 Z" fill="#534d02"/>
<path d="M360.6 130.3 L435.2 120.6 L435.2 126.2 L360.6 137.6 Z" fill="url(#fold)"/>
<path d="M360.6 130.1 L435.2 120.4" stroke="#4a460c" stroke-width="0.5"/>
<path d="M359.6 131 L363.4 130.5 L363.4 236.8 L359.6 236 Z" fill="#c9c35e"/><path d="M363.4 130.5 L363.4 236.8" stroke="#4a460c" stroke-width="0.4"/>
<path d="M362.6 236.6 L372.2 238.6 L424.2 226.3 L435 214 L435 215.6 L424.6 227.6 L372.2 239.8 L362.6 237.8 Z" fill="#3e3a08"/>
<!-- slot window -->
<path d="M397.2 175.4 L402 174.8 L402 213 L397.2 213.6 Z" fill="#b6c7dc"/>
<path d="M396.2 175.6 L397.4 175.4 L397.4 214 L403 213 L403 214.5 L396.2 215.5 Z" fill="#c9c35e"/>
<path d="M398.4 156 L401 156 L401 159.6 L408.5 159.6 L408.5 162.6 L401 162.6 L401 174 L398.4 174.4 Z" fill="#d0ca68"/>
<g fill="#cdc764">
 <rect x="383.8" y="143.3" width="1.6" height="12.3" rx="0.8"/>
 <rect x="368.8" y="157" width="1.6" height="12.3" rx="0.8"/>
 <rect x="369.2" y="216" width="1.6" height="10" rx="0.8"/>
 <rect x="385.3" y="221" width="1.6" height="10" rx="0.8"/>
 <circle cx="394.5" cy="227" r="0.9"/><circle cx="407.5" cy="222.8" r="0.9"/>
</g>
<!-- lower bracket -->
<path d="M314.4 273.2 L338.1 266.6 L394 285.6 L392.4 301.8 Z" fill="#6ea564"/>
<path d="M313 272.6 L392.4 300.6 L392.2 304.2 L314 276 Z" fill="#5d9652"/>
<path d="M318 271.4 L338.6 265.6 L394 283.4" fill="none" stroke="#3f7d34" stroke-width="0.5"/>
<path d="M317 276 L392 301" fill="none" stroke="#4a8a3c" stroke-width="0.4"/>
<ellipse cx="368.6" cy="285.6" rx="3.4" ry="1.4" fill="#3a7a30"/>
<path d="M311.9 243.3 L334.7 236.4 Q338.1 236 338.1 240.5 L338.1 266.6 L314.4 273.8 Z" fill="#1c4612" stroke="#3f7a34" stroke-width="0.5"/>
<path d="M311.9 243.3 L313.8 242.8 L315.8 273.2 L314.4 273.8 Z" fill="#5a9a4c"/>
<path d="M326.5 240 L327 270" stroke="#224f1c" stroke-width="0.5"/>
<ellipse cx="319" cy="251.5" rx="1.9" ry="3.2" fill="#d7e2ee" stroke="#80b070" stroke-width="0.5"/>
<ellipse cx="331.8" cy="248" rx="1.9" ry="3.2" fill="#d7e2ee" stroke="#80b070" stroke-width="0.5"/>
<path d="M393 263.9 L410 260.4 Q411.5 260.2 412.5 261.5 L415.9 267.4 L415.9 293.6 L391.9 303.9 Z" fill="#1d4813" stroke="#3f7a34" stroke-width="0.5"/>
<path d="M391.9 264.2 L394.2 263.8 L394.2 303 L391.9 303.9 Z" fill="#5a9a4c"/>
<path d="M404 262 L404.4 299" stroke="#224f1c" stroke-width="0.5"/>
<ellipse cx="399.2" cy="274.6" rx="1.8" ry="3.2" fill="#d7e2ee" stroke="#80b070" stroke-width="0.5"/>
<ellipse cx="410.2" cy="271.4" rx="1.8" ry="3.2" fill="#d7e2ee" stroke="#80b070" stroke-width="0.5"/>
<path d="M311.2 243.4 L310.2 241.2 M335 236.2 L335.6 234.6" stroke="#1b1b1b" stroke-width="0.7"/>
</svg>
<svg class="a" style="left:118px;top:294px;" width="16" height="20" viewBox="0 0 16 20"><path d="M12.9 16.4 L12.9 10.6" stroke="#2a2ae0" stroke-width="1"/><path d="M11.7 11.6 L12.9 8.6 L14.1 11.6 Z" fill="#2a2ae0"/><text x="11.9" y="5.6" font-size="3" fill="#3a3ad0" font-family="Liberation Sans" font-weight="700">Z</text><path d="M12.9 16.4 L9 15.6" stroke="#d02020" stroke-width="1.1"/><path d="M12.9 16.6 L8.4 18.2" stroke="#22b022" stroke-width="1.3"/><text x="3" y="15.6" font-size="2.8" fill="#e05050" font-family="Liberation Sans">X</text><text x="3" y="20" font-size="2.8" fill="#30c030" font-family="Liberation Sans">Y</text></svg>
<div class="a" style="left:617.1px;top:78.5px;width:82.9px;height:327px;background:#eeeeee"></div>
<div class="a" style="left:617.3px;top:78.5px;width:1.6px;height:327px;background:#dcdcdc"></div>
<div class="a" style="left:619.6px;top:78.5px;width:80.4px;height:11px;background:#e9e9e9"></div>
<div class="t" style="left:621.6px;top:81.77px;font-size:5.65px;color:#444;"><span style="letter-spacing:-0.35px">属性列表</span></div>
<svg class="a" style="left:678.9px;top:82.6px;" width="3.6" height="2.4" viewBox="0 0 3.6 2.4"><path d="M0.2 0.2 L3.4 0.2 L1.8 2.2 Z" fill="#555"/></svg>
<svg class="a" style="left:687.7px;top:81.2px;" width="4" height="5" viewBox="0 0 4 5"><path d="M0.8 0.5 L3.2 0.5 M1.2 0.5 L1.2 2.8 M2.8 0.5 L2.8 2.8 M0.3 2.8 L3.7 2.8 M2 2.8 L2 4.8" fill="none" stroke="#666" stroke-width="0.5"/></svg>
<svg class="a" style="left:695.4px;top:82.1px;" width="3.8" height="3.8" viewBox="0 0 3.8 3.8"><path d="M0.4 0.4 L3.4 3.4 M3.4 0.4 L0.4 3.4" stroke="#666" stroke-width="0.5"/></svg>
<svg class="a" style="left:697px;top:73.6px;" width="3" height="2" viewBox="0 0 3 2"><path d="M0 0 L3 0 L1.5 2 Z" fill="#555"/></svg>
<div class="a" style="left:621px;top:93.6px;width:8.3px;height:8.4px;background:#d5d5d5"></div>
<svg class="a" style="left:622.2px;top:94.6px;" width="6" height="6.4" viewBox="0 0 6 6.4"><g stroke="#666" stroke-width="0.5"><path d="M0.3 0.6 L2.4 0.6 M0.3 1.6 L2.4 1.6 M3.2 2.8 L5.7 2.8 M3.2 3.8 L5.7 3.8 M0.3 4.8 L2.4 4.8 M0.3 5.8 L2.4 5.8"/></g><rect x="3.2" y="0.2" width="2.5" height="1.8" fill="none" stroke="#888" stroke-width="0.4"/></svg>
<svg class="a" style="left:631.8px;top:93.8px;" width="6" height="8" viewBox="0 0 6 8"><text x="0" y="3.4" font-size="3.6" fill="#3b6fc4" font-family="Liberation Sans" font-weight="700">A</text><text x="0" y="7.6" font-size="3.6" fill="#a43aa8" font-family="Liberation Sans" font-weight="700">Z</text><path d="M4.8 0.6 L4.8 7.2" stroke="#555" stroke-width="0.5"/><path d="M4 6.2 L4.8 7.6 L5.6 6.2" fill="none" stroke="#555" stroke-width="0.5"/></svg>
<div class="a" style="left:642.8px;top:93.3px;width:57.2px;height:9px;background:#fff;border:0.5px solid #e0e0e0"></div>
<svg class="a" style="left:690.8px;top:94.2px;" width="7" height="7" viewBox="0 0 7 7"><circle cx="4.3" cy="2.8" r="2.1" fill="none" stroke="#2f74c8" stroke-width="0.8"/><path d="M2.8 4.3 L0.6 6.5" stroke="#2f74c8" stroke-width="1"/></svg>
<div class="a" style="left:619.6px;top:104.2px;width:80.4px;height:261px;background:#fff"></div>
<div class="a" style="left:659.5px;top:104.2px;width:0.6px;height:261px;background:#e6e6e6"></div>
<div class="a" style="left:619.6px;top:365px;width:80.4px;height:28px;background:#eeeeee;border-top:0.6px solid #dcdcdc"></div>
<div class="a" style="left:627px;top:391.6px;width:28px;height:1.4px;background:#a8a8a8;border-radius:1px"></div>
<div class="a" style="left:617.1px;top:394.5px;width:82.9px;height:10.9px;background:#ececec"></div>
<div class="a" style="left:647.7px;top:394.8px;width:25.8px;height:10px;background:#fafafa;border:0.5px solid #d4d4d4;border-top:none"></div>
<div class="t" style="left:620.7px;top:397.78px;font-size:5.65px;color:#444;"><span style="letter-spacing:-0.35px">工序参</span>...</div>
<div class="t" style="left:649.2px;top:397.78px;font-size:5.65px;color:#444;"><span style="letter-spacing:-0.35px">属性列表</span></div>
<div class="t" style="left:676.5px;top:397.78px;font-size:5.65px;color:#444;"><span style="letter-spacing:-0.35px">工序工</span>...</div>
<div class="a" style="left:114.8px;top:328px;width:502.3px;height:77px;background:#ececec"></div>
<div class="a" style="left:114.8px;top:327.2px;width:502.3px;height:1.9px;background:#cbcbcb"></div>
<div class="t" style="left:116.6px;top:332.57px;font-size:5.65px;color:#2a6fc0;"><span style="letter-spacing:-0.35px">流程图</span></div>
<svg class="a" style="left:602.3px;top:333.6px;" width="3.6" height="2.4" viewBox="0 0 3.6 2.4"><path d="M0.2 0.2 L3.4 0.2 L1.8 2.2 Z" fill="#555"/></svg>
<svg class="a" style="left:610.5px;top:332px;" width="4" height="5" viewBox="0 0 4 5"><path d="M0.8 0.5 L3.2 0.5 M1.2 0.5 L1.2 2.8 M2.8 0.5 L2.8 2.8 M0.3 2.8 L3.7 2.8 M2 2.8 L2 4.8" fill="none" stroke="#666" stroke-width="0.5"/></svg>
<div class="a" style="left:114.8px;top:339.6px;width:502.3px;height:11.7px;background:#f0f0f0"></div>
<svg class="a" style="left:120px;top:342.6px;" width="7" height="6" viewBox="0 0 7 6"><rect x="0.3" y="0.3" width="6.4" height="5.4" fill="#f4f7fb" stroke="#4a76b0" stroke-width="0.5"/><rect x="0.3" y="0.3" width="6.4" height="1.3" fill="#4a76b0"/><path d="M1.5 2.6 L5 4.8" stroke="#888" stroke-width="0.5"/></svg>
<div class="t" style="left:128.6px;top:343.78px;font-size:5.65px;color:#333;"><span style="letter-spacing:-0.35px">工序</span></div>
<svg class="a" style="left:143.4px;top:342.2px;" width="7" height="7" viewBox="0 0 7 7"><rect x="0.3" y="0.3" width="3.6" height="3" fill="#dfe8f3" stroke="#4a6f9f" stroke-width="0.5"/><rect x="3" y="3.6" width="3.6" height="3" fill="#f6e2c8" stroke="#c06a2a" stroke-width="0.5"/></svg>
<div class="t" style="left:152px;top:343.78px;font-size:5.65px;color:#333;"><span style="letter-spacing:-0.35px">连线</span></div>
<svg class="a" style="left:167.7px;top:342.6px;" width="7" height="6" viewBox="0 0 7 6"><rect x="0.3" y="0.3" width="6" height="5.4" fill="#e8f0fa" stroke="#5b86c0" stroke-width="0.5"/><rect x="1.3" y="0.3" width="4" height="2" fill="#9bb8de"/></svg>
<div class="t" style="left:175.7px;top:343.78px;font-size:5.65px;color:#333;"><span style="letter-spacing:-0.35px">确定</span></div>
<svg class="a" style="left:192px;top:342.6px;" width="7" height="6" viewBox="0 0 7 6"><path d="M5.6 1.6 Q6.5 4.8 3.5 5 L1.2 5" fill="none" stroke="#3a9a3a" stroke-width="1.1"/><path d="M1.2 0.9 L5.6 1.4" stroke="#3a9a3a" stroke-width="1.1"/><path d="M0.2 5 L2.2 3.6 L2.2 6.4 Z" fill="#3a9a3a"/></svg>
<div class="t" style="left:198.6px;top:343.78px;font-size:5.65px;color:#333;"><span style="letter-spacing:-0.35px">取消</span></div>
<svg class="a" style="left:215px;top:342.4px;" width="7" height="7" viewBox="0 0 7 7"><rect x="0.3" y="0.3" width="5" height="5.6" fill="#e6e6e6" stroke="#777" stroke-width="0.5"/><path d="M3.4 3.8 L6.4 6.6 M6.4 3.8 L3.4 6.6" stroke="#d23a2a" stroke-width="0.9"/></svg>
<div class="t" style="left:222.3px;top:343.78px;font-size:5.65px;color:#333;"><span style="letter-spacing:-0.35px">删除</span></div>
<div class="a" style="left:114.9px;top:351.3px;width:501.6px;height:43px;background:#fff;border-top:0.7px solid #8c8c8c;border-left:0.5px solid #bbb"></div>
<div class="t" style="left:195.7px;top:366.57px;font-size:5.65px;color:#222;">01&nbsp; <span style="letter-spacing:-0.35px">安装导向柱固定座</span></div>
<svg class="a" style="left:216.6px;top:376.4px;" width="14.6" height="11.2" viewBox="0 0 14.6 11.2"><rect x="0.3" y="0.4" width="14" height="10.6" fill="#f3f5f7" stroke="#c2cad6" stroke-width="0.5"/><rect x="0.3" y="0.3" width="14" height="1.2" fill="#3d6fc0"/><path d="M2.4 1.6 L2.4 10.8 M0.5 4.4 L14 4.4 M0.5 6.6 L14 6.6 M0.5 8.8 L14 8.8" stroke="#dde2e8" stroke-width="0.45"/><rect x="3.6" y="3.6" width="2.8" height="1" fill="#3a6ab8"/><path d="M6.2 4.6 L12.2 9.6" stroke="#7090c8" stroke-width="0.6" stroke-dasharray="0.8 0.5"/><ellipse cx="8.6" cy="6.8" rx="1.3" ry="0.9" fill="#e8a050"/><rect x="12" y="9.1" width="1.9" height="1.3" fill="#2a9a3a"/></svg>
<div class="a" style="left:231.2px;top:381.4px;width:57.69999999999998px;height:1.4px;background:#ea2a1e"></div>
<svg class="a" style="left:287.5px;top:379.8px;" width="5.4" height="4.6" viewBox="0 0 5.4 4.6"><path d="M0 0 L5.4 2.3 L0 4.6 Z" fill="#ea2a1e"/></svg>
<div class="t" style="left:272.3px;top:366.57px;font-size:5.65px;color:#222;">02&nbsp; <span style="letter-spacing:-0.35px">安装下侧微动开关</span></div>
<svg class="a" style="left:292.9px;top:376.4px;" width="14.6" height="11.2" viewBox="0 0 14.6 11.2"><rect x="0.3" y="0.4" width="14" height="10.6" fill="#f3f5f7" stroke="#c2cad6" stroke-width="0.5"/><rect x="0.3" y="0.3" width="14" height="1.2" fill="#3d6fc0"/><path d="M2.4 1.6 L2.4 10.8 M0.5 4.4 L14 4.4 M0.5 6.6 L14 6.6 M0.5 8.8 L14 8.8" stroke="#dde2e8" stroke-width="0.45"/><rect x="3.6" y="3.6" width="2.8" height="1" fill="#3a6ab8"/><path d="M6.2 4.6 L12.2 9.6" stroke="#7090c8" stroke-width="0.6" stroke-dasharray="0.8 0.5"/><ellipse cx="8.6" cy="6.8" rx="1.3" ry="0.9" fill="#e8a050"/><rect x="12" y="9.1" width="1.9" height="1.3" fill="#2a9a3a"/></svg>
<div class="a" style="left:307.5px;top:381.4px;width:44.80000000000003px;height:1.4px;background:#ea2a1e"></div>
<svg class="a" style="left:350.90000000000003px;top:379.8px;" width="5.4" height="4.6" viewBox="0 0 5.4 4.6"><path d="M0 0 L5.4 2.3 L0 4.6 Z" fill="#ea2a1e"/></svg>
<div class="t" style="left:339.2px;top:366.57px;font-size:5.65px;color:#222;">03&nbsp; <span style="letter-spacing:-0.35px">安装上侧微动开关</span></div>
<svg class="a" style="left:356.3px;top:376.4px;" width="14.6" height="11.2" viewBox="0 0 14.6 11.2"><rect x="0.3" y="0.4" width="14" height="10.6" fill="#f3f5f7" stroke="#c2cad6" stroke-width="0.5"/><rect x="0.3" y="0.3" width="14" height="1.2" fill="#3d6fc0"/><path d="M2.4 1.6 L2.4 10.8 M0.5 4.4 L14 4.4 M0.5 6.6 L14 6.6 M0.5 8.8 L14 8.8" stroke="#dde2e8" stroke-width="0.45"/><rect x="3.6" y="3.6" width="2.8" height="1" fill="#3a6ab8"/><path d="M6.2 4.6 L12.2 9.6" stroke="#7090c8" stroke-width="0.6" stroke-dasharray="0.8 0.5"/><ellipse cx="8.6" cy="6.8" rx="1.3" ry="0.9" fill="#e8a050"/><rect x="12" y="9.1" width="1.9" height="1.3" fill="#2a9a3a"/></svg>
<div class="a" style="left:370.90000000000003px;top:381.4px;width:65.79999999999998px;height:1.4px;background:#ea2a1e"></div>
<svg class="a" style="left:435.3px;top:379.8px;" width="5.4" height="4.6" viewBox="0 0 5.4 4.6"><path d="M0 0 L5.4 2.3 L0 4.6 Z" fill="#ea2a1e"/></svg>
<div class="t" style="left:429.1px;top:366.57px;font-size:5.65px;color:#222;">04&nbsp; <span style="letter-spacing:-0.35px">安装升降器</span></div>
<svg class="a" style="left:440.7px;top:376.4px;" width="14.6" height="11.2" viewBox="0 0 14.6 11.2"><rect x="0.3" y="0.4" width="14" height="10.6" fill="#f3f5f7" stroke="#c2cad6" stroke-width="0.5"/><rect x="0.3" y="0.3" width="14" height="1.2" fill="#3d6fc0"/><path d="M2.4 1.6 L2.4 10.8 M0.5 4.4 L14 4.4 M0.5 6.6 L14 6.6 M0.5 8.8 L14 8.8" stroke="#dde2e8" stroke-width="0.45"/><rect x="3.6" y="3.6" width="2.8" height="1" fill="#3a6ab8"/><path d="M6.2 4.6 L12.2 9.6" stroke="#7090c8" stroke-width="0.6" stroke-dasharray="0.8 0.5"/><ellipse cx="8.6" cy="6.8" rx="1.3" ry="0.9" fill="#e8a050"/><rect x="12" y="9.1" width="1.9" height="1.3" fill="#2a9a3a"/></svg>
<svg class="a" style="left:224px;top:383.4px;" width="6" height="9" viewBox="0 0 6 9"><path d="M0.4 0.4 L0.4 7 L1.9 5.5 L3.1 8.2 L4.2 7.7 L3 5 L5 5 Z" fill="#fff" stroke="#8a8a8a" stroke-width="0.55"/></svg>
<div class="a" style="left:114.9px;top:394.2px;width:22.2px;height:10.8px;background:#fafafa;border:0.5px solid #d0d0d0;border-top:none"></div>
<div class="t" style="left:117px;top:397.57px;font-size:5.65px;color:#333;"><span style="letter-spacing:-0.35px">流程图</span></div>
<div class="t" style="left:140.4px;top:397.57px;font-size:5.65px;color:#444;"><span style="letter-spacing:-0.35px">路径编辑器</span></div>
<div class="a" style="left:0px;top:405.4px;width:700px;height:9.6px;background:#f3f3f3;border-top:0.5px solid #dcdcdc"></div>
<div class="t" style="left:243.6px;top:408.90px;font-size:5.4px;color:#333;"><span style="letter-spacing:0.40px">视图尺寸</span>: 1146 x 568</div>
<div class="a" style="left:303.2px;top:407.6px;width:1.4px;height:5.4px;background:#e9a93a"></div>
<div class="t" style="left:307.9px;top:408.90px;font-size:5.4px;color:#222;font-weight:700"><span style="letter-spacing:0.40px">单位</span>:</div>
<div class="t" style="left:326.5px;top:408.90px;font-size:5.4px;color:#333;">mm, deg</div>
<svg class="a" style="left:356.2px;top:407px;" width="7" height="7" viewBox="0 0 7 7"><circle cx="2.8" cy="2.8" r="2" fill="none" stroke="#555" stroke-width="0.6"/><path d="M4.2 4.2 L6 6" stroke="#555" stroke-width="0.8"/></svg>
<svg class="a" style="left:366px;top:407px;" width="7" height="7" viewBox="0 0 7 7"><circle cx="2.8" cy="2.8" r="2" fill="none" stroke="#555" stroke-width="0.6"/><path d="M4.2 4.2 L6 6" stroke="#555" stroke-width="0.8"/></svg>
<svg class="a" style="left:375.2px;top:410px;" width="2.4" height="1.8" viewBox="0 0 2.4 1.8"><path d="M0 0 L2.4 0 L1.2 1.6 Z" fill="#666"/></svg>
<svg class="a" style="left:380.5px;top:407px;" width="7" height="7" viewBox="0 0 7 7"><rect x="0.5" y="1" width="4" height="4.5" fill="#6fa0d8" stroke="#2a5a9a" stroke-width="0.4"/><rect x="3" y="3" width="3" height="3" fill="#a8c8ea"/></svg>
<svg class="a" style="left:389px;top:410px;" width="2.4" height="1.8" viewBox="0 0 2.4 1.8"><path d="M0 0 L2.4 0 L1.2 1.6 Z" fill="#666"/></svg>
<svg class="a" style="left:394px;top:407px;" width="7" height="7" viewBox="0 0 7 7"><path d="M0.6 2.2 L3 1 L5.6 2.2 L5.6 5 L3 6.2 L0.6 5 Z" fill="#e8c030" stroke="#8a6a10" stroke-width="0.4"/></svg>
<svg class="a" style="left:402.6px;top:410px;" width="2.4" height="1.8" viewBox="0 0 2.4 1.8"><path d="M0 0 L2.4 0 L1.2 1.6 Z" fill="#666"/></svg>
<svg class="a" style="left:407.6px;top:407px;" width="7" height="7" viewBox="0 0 7 7"><path d="M0.6 1.6 L3.4 0.6 L5.8 1.6 L5.8 5.4 L3 6.4 L0.6 5.4 Z" fill="#2f6fc8" stroke="#1a3f80" stroke-width="0.4"/></svg>
<svg class="a" style="left:416.2px;top:410px;" width="2.4" height="1.8" viewBox="0 0 2.4 1.8"><path d="M0 0 L2.4 0 L1.2 1.6 Z" fill="#666"/></svg>
<svg class="a" style="left:421px;top:407px;" width="7" height="7" viewBox="0 0 7 7"><path d="M0.5 3.5 L6 3.5 M3 1 L3 6" stroke="#3a6aa8" stroke-width="0.6"/><rect x="3.4" y="3.8" width="2.4" height="2.2" fill="#d04040"/></svg>
<svg class="a" style="left:429.6px;top:410px;" width="2.4" height="1.8" viewBox="0 0 2.4 1.8"><path d="M0 0 L2.4 0 L1.2 1.6 Z" fill="#666"/></svg>
<div class="a" style="left:433.6px;top:406.6px;width:7.4px;height:7.6px;background:#cfdcec;border:0.5px solid #5a7ab0"></div>
<svg class="a" style="left:434.6px;top:407px;" width="7" height="7" viewBox="0 0 7 7"><rect x="0.6" y="0.8" width="4.6" height="4.6" fill="#fff" stroke="#335" stroke-width="0.4"/><path d="M1.5 4.5 L5.2 1" stroke="#2a5aa0" stroke-width="0.7"/></svg>
<svg class="a" style="left:444px;top:407px;" width="7" height="7" viewBox="0 0 7 7"><path d="M0.5 5.5 Q2 0.5 3.5 3 Q5 5.5 6.5 1" fill="none" stroke="#888" stroke-width="0.5"/></svg>
<svg class="a" style="left:452px;top:410px;" width="2.4" height="1.8" viewBox="0 0 2.4 1.8"><path d="M0 0 L2.4 0 L1.2 1.6 Z" fill="#666"/></svg>
<svg class="a" style="left:456.6px;top:407px;" width="7" height="7" viewBox="0 0 7 7"><path d="M0.6 1.6 L3.4 0.6 L5.8 1.6 L5.8 5.4 L3 6.4 L0.6 5.4 Z" fill="#2f6fc8" stroke="#1a3f80" stroke-width="0.4"/></svg>
<svg class="a" style="left:465.2px;top:410px;" width="2.4" height="1.8" viewBox="0 0 2.4 1.8"><path d="M0 0 L2.4 0 L1.2 1.6 Z" fill="#666"/></svg>
<svg class="a" style="left:471px;top:407px;" width="7" height="7" viewBox="0 0 7 7"><path d="M1 6 L1 2 L2.4 1 L2.4 4 L4 4" fill="none" stroke="#999" stroke-width="0.5"/></svg>
<div class="a" style="left:490.8px;top:406.8px;width:7.2px;height:7.4px;background:#dbe5f1;border:0.5px solid #6b8bbf"></div>
<svg class="a" style="left:491.6px;top:407px;" width="7" height="7" viewBox="0 0 7 7"><path d="M1.5 1 L1.5 5.6 L2.6 4.6 L3.5 6.2 L4.3 5.8 L3.5 4.2 L4.9 4.2 Z" fill="#fff" stroke="#333" stroke-width="0.4"/></svg>
<svg class="a" style="left:501.5px;top:407px;" width="7" height="7" viewBox="0 0 7 7"><path d="M1.2 1 L1.2 5.2 L2.2 4.3 L3 5.8 L3.7 5.4 L3 4 L4.3 4 Z" fill="#eee" stroke="#777" stroke-width="0.4"/></svg>
<div class="a" style="left:510.4px;top:406.6px;width:36.9px;height:7.8px;background:#e9e9e9;border:0.5px solid #c8c8c8"></div>
<div class="t" style="left:512px;top:409.00px;font-size:5.2px;color:#999;"><span style="letter-spacing:0.20px">缺省</span></div>
<svg class="a" style="left:543.5px;top:409.8px;" width="2.2" height="1.6" viewBox="0 0 2.2 1.6"><path d="M0 0 L2.2 0 L1.1 1.5 Z" fill="#888"/></svg>
<div class="a" style="left:549.6px;top:406.6px;width:60.4px;height:7.8px;background:#fff;border:0.5px solid #c8c8c8"></div>
<div class="t" style="left:551px;top:409.00px;font-size:5.2px;color:#222;"><span style="letter-spacing:0.20px">任意</span></div>
<svg class="a" style="left:606.5px;top:409.8px;" width="2.2" height="1.6" viewBox="0 0 2.2 1.6"><path d="M0 0 L2.2 0 L1.1 1.5 Z" fill="#555"/></svg>
<div class="a" style="left:611.7px;top:406.6px;width:78.7px;height:7.8px;background:#fff;border:0.5px solid #c8c8c8"></div>
<div class="t" style="left:613px;top:409.00px;font-size:5.2px;color:#222;"><span style="letter-spacing:0.20px">缺省</span></div>
<svg class="a" style="left:687px;top:409.8px;" width="2.2" height="1.6" viewBox="0 0 2.2 1.6"><path d="M0 0 L2.2 0 L1.1 1.5 Z" fill="#555"/></svg>
<svg class="a" style="left:692.5px;top:406.6px;" width="7" height="7" viewBox="0 0 7 7"><path d="M1 6.5 L3.5 1 L6 6.5 Z" fill="#e03a2a"/><rect x="3" y="4" width="3" height="2.6" fill="#2a6ac0"/></svg>
<div class="a" style="left:8px;top:401.5px;width:100px;height:11px;background:#fff;border:0.5px solid #d8d8d8;border-radius:1px"></div>
<svg class="a" style="left:7.6px;top:398.6px;" width="11" height="12.6" viewBox="0 0 11 12.6"><path d="M1.2 2 L9.8 0.4 L10.4 10 L1.6 12 Z" fill="#f05a22"/><text x="2.6" y="9.6" font-size="8.4" font-weight="700" fill="#fff" font-family="Liberation Sans" transform="rotate(-8 5 6)">S</text></svg>
<svg class="a" style="left:24.6px;top:403.8px;" width="6.6" height="6.6" viewBox="0 0 6.6 6.6"><rect x="0.6" y="1.6" width="5.4" height="3.2" fill="none" stroke="#1e73d8" stroke-width="0.9"/><path d="M3.3 0 L3.3 6.6" stroke="#1e73d8" stroke-width="0.9"/></svg>
<svg class="a" style="left:35.6px;top:405px;" width="6" height="5" viewBox="0 0 6 5"><circle cx="1.2" cy="1.4" r="0.9" fill="#1e73d8"/><path d="M3 2.2 L5.2 3.2 L3.6 4.6" fill="none" stroke="#1e73d8" stroke-width="0.8"/></svg>
<svg class="a" style="left:45.6px;top:403.4px;" width="5" height="7.4" viewBox="0 0 5 7.4"><rect x="1.4" y="0.2" width="2.2" height="4.2" rx="1.1" fill="#1e73d8"/><path d="M0.5 3 Q0.5 5.6 2.5 5.6 Q4.5 5.6 4.5 3 M2.5 5.6 L2.5 7.2" fill="none" stroke="#1e73d8" stroke-width="0.6"/></svg>
<svg class="a" style="left:56.6px;top:403.8px;" width="6.6" height="6.4" viewBox="0 0 6.6 6.4"><rect x="0.4" y="0.4" width="5.8" height="5.6" rx="0.6" fill="#1e73d8"/><path d="M1.6 2 L5 2 M1.6 3.4 L5 3.4 M1.6 4.8 L5 4.8" stroke="#fff" stroke-width="0.4"/></svg>
<svg class="a" style="left:67.2px;top:402.6px;" width="7" height="7.6" viewBox="0 0 7 7.6"><path d="M0.6 2 L3 6.8 L5.6 3.2" fill="#8a5ad8" stroke="#8a5ad8" stroke-width="0.8"/><circle cx="5.8" cy="1.2" r="1" fill="#f04a3a"/></svg>
<svg class="a" style="left:77px;top:404.2px;" width="7.4" height="5.6" viewBox="0 0 7.4 5.6"><rect x="0.4" y="0.6" width="6.6" height="4.6" rx="2.3" fill="#1e73d8"/><circle cx="2.6" cy="2.9" r="0.6" fill="#fff"/><circle cx="4.8" cy="2.9" r="0.6" fill="#fff"/></svg>
<svg class="a" style="left:87.6px;top:403.8px;" width="6.4" height="6.4" viewBox="0 0 6.4 6.4"><rect x="0.3" y="0.3" width="2.4" height="2.4" fill="#1e73d8"/><rect x="3.7" y="0.3" width="2.4" height="2.4" fill="#1e73d8"/><rect x="0.3" y="3.7" width="2.4" height="2.4" fill="#1e73d8"/><rect x="3.7" y="3.7" width="2.4" height="2.4" fill="#1e73d8"/></svg>
<svg class="a" style="left:98px;top:403.4px;" width="6.8" height="7" viewBox="0 0 6.8 7"><path d="M3.4 0.3 L4.4 1.4 L6.2 1.4 L6.2 3.2 L6.6 3.5 L5.8 5 L4.4 6.6 L3.4 5.8 L2.4 6.6 L0.8 5 L0.2 3.5 L0.6 3.2 L0.6 1.4 L2.4 1.4 Z" fill="#1e73d8"/><circle cx="3.4" cy="3.6" r="1" fill="#fff"/></svg>
<div class="a" style="left:0px;top:413.6px;width:36px;height:0.5px;background:#6a8fd0"></div>
</body></html>
